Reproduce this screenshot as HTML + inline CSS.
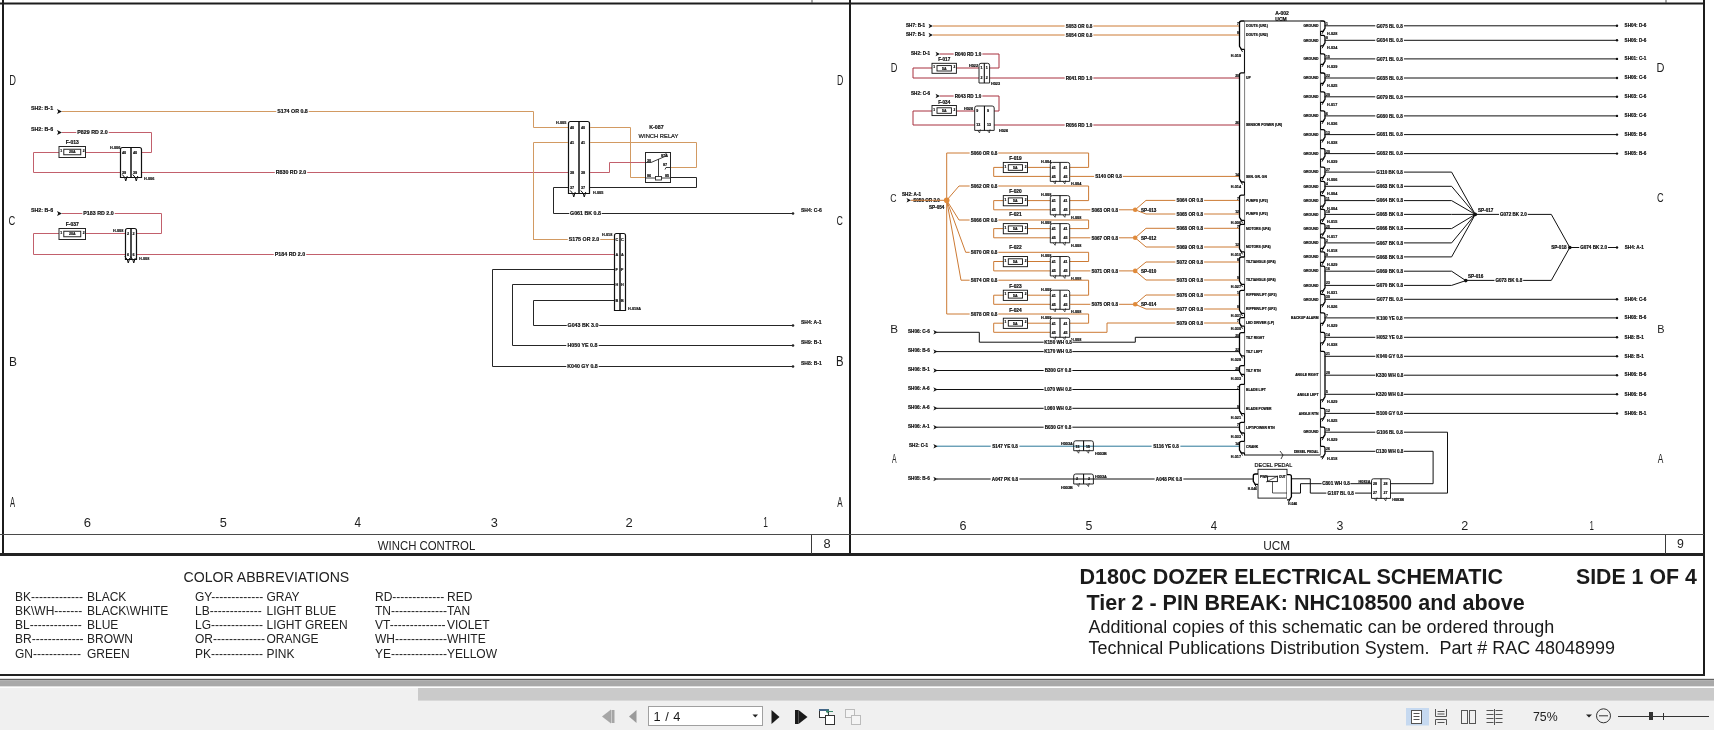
<!DOCTYPE html>
<html><head><meta charset="utf-8"><style>
html,body{margin:0;padding:0;background:#fff;width:1714px;height:730px;overflow:hidden}
svg{position:absolute;left:0;top:0;display:block;will-change:transform}
</style></head><body>
<svg width="1714" height="730" viewBox="0 0 1714 730" xml:space="preserve">
<rect x="0" y="2.5" width="1705" height="2.0" fill="#1c1c1c"/>
<rect x="811.5" y="0" width="1.0" height="3" fill="#555"/>
<rect x="1665.5" y="0" width="1.0" height="3" fill="#555"/>
<rect x="2" y="0" width="2" height="556" fill="#1c1c1c"/>
<rect x="849" y="0" width="2" height="556" fill="#1c1c1c"/>
<rect x="1703" y="0" width="2" height="676" fill="#1c1c1c"/>
<rect x="0" y="534" width="1704" height="1" fill="#4a4a4a"/>
<rect x="0" y="553" width="1705" height="3" fill="#222"/>
<rect x="811" y="535" width="1" height="19" fill="#3a3a3a"/>
<rect x="1665" y="535" width="1" height="19" fill="#3a3a3a"/>
<rect x="0" y="674" width="1705" height="2" fill="#222"/>
<rect x="0" y="678.8" width="1714" height="1.5" fill="#606060"/>
<rect x="0" y="680.3" width="1714" height="6.300000000000068" fill="#a9a9a9"/>
<rect x="0" y="686.6" width="1714" height="1.3999999999999773" fill="#fdfdfd"/>
<rect x="0" y="688" width="1714" height="42" fill="#f0f0f0"/>
<rect x="418" y="688" width="1296" height="12.600000000000023" fill="#cacaca"/>
<text transform="translate(9.25,84.70) scale(0.677,1)" font-size="13.77" fill="#1e1e1e" font-family="Liberation Sans">D</text>
<text transform="translate(837.09,84.70) scale(0.640,1)" font-size="13.77" fill="#1e1e1e" font-family="Liberation Sans">D</text>
<text transform="translate(8.53,225.17) scale(0.707,1)" font-size="13.24" fill="#1e1e1e" font-family="Liberation Sans">C</text>
<text transform="translate(836.56,225.46) scale(0.657,1)" font-size="13.52" fill="#1e1e1e" font-family="Liberation Sans">C</text>
<text transform="translate(8.95,365.80) scale(0.922,1)" font-size="12.90" fill="#1e1e1e" font-family="Liberation Sans">B</text>
<text transform="translate(836.09,366.00) scale(0.822,1)" font-size="13.77" fill="#1e1e1e" font-family="Liberation Sans">B</text>
<text transform="translate(10.00,507.00) scale(0.550,1)" font-size="13.77" fill="#1e1e1e" font-family="Liberation Sans">A</text>
<text transform="translate(837.20,507.00) scale(0.577,1)" font-size="13.91" fill="#1e1e1e" font-family="Liberation Sans">A</text>
<text transform="translate(890.75,71.80) scale(0.748,1)" font-size="12.46" fill="#1e1e1e" font-family="Liberation Sans">D</text>
<text transform="translate(1656.62,72.40) scale(0.874,1)" font-size="12.61" fill="#1e1e1e" font-family="Liberation Sans">D</text>
<text transform="translate(890.26,202.18) scale(0.756,1)" font-size="11.55" fill="#1e1e1e" font-family="Liberation Sans">C</text>
<text transform="translate(1656.94,202.48) scale(0.743,1)" font-size="12.39" fill="#1e1e1e" font-family="Liberation Sans">C</text>
<text transform="translate(890.26,332.80) scale(1.035,1)" font-size="11.30" fill="#1e1e1e" font-family="Liberation Sans">B</text>
<text transform="translate(1657.32,332.60) scale(0.932,1)" font-size="11.74" fill="#1e1e1e" font-family="Liberation Sans">B</text>
<text transform="translate(892.00,463.00) scale(0.547,1)" font-size="12.46" fill="#1e1e1e" font-family="Liberation Sans">A</text>
<text transform="translate(1657.70,463.20) scale(0.639,1)" font-size="13.04" fill="#1e1e1e" font-family="Liberation Sans">A</text>
<text transform="translate(83.75,526.77) scale(0.975,1)" font-size="13.38" fill="#1e1e1e" font-family="Liberation Sans">6</text>
<text transform="translate(219.69,526.76) scale(0.941,1)" font-size="13.57" fill="#1e1e1e" font-family="Liberation Sans">5</text>
<text transform="translate(354.56,527.04) scale(0.842,1)" font-size="13.97" fill="#1e1e1e" font-family="Liberation Sans">4</text>
<text transform="translate(490.69,526.77) scale(0.954,1)" font-size="13.38" fill="#1e1e1e" font-family="Liberation Sans">3</text>
<text transform="translate(625.55,526.90) scale(0.961,1)" font-size="13.57" fill="#1e1e1e" font-family="Liberation Sans">2</text>
<text transform="translate(763.23,526.90) scale(0.608,1)" font-size="13.77" fill="#1e1e1e" font-family="Liberation Sans">1</text>
<text transform="translate(959.47,529.97) scale(1.006,1)" font-size="12.54" fill="#1e1e1e" font-family="Liberation Sans">6</text>
<text transform="translate(1085.51,529.97) scale(0.971,1)" font-size="12.71" fill="#1e1e1e" font-family="Liberation Sans">5</text>
<text transform="translate(1210.77,530.23) scale(0.869,1)" font-size="13.09" fill="#1e1e1e" font-family="Liberation Sans">4</text>
<text transform="translate(1336.51,529.97) scale(0.984,1)" font-size="12.54" fill="#1e1e1e" font-family="Liberation Sans">3</text>
<text transform="translate(1461.37,530.10) scale(0.992,1)" font-size="12.71" fill="#1e1e1e" font-family="Liberation Sans">2</text>
<text transform="translate(1589.57,530.10) scale(0.613,1)" font-size="12.90" fill="#1e1e1e" font-family="Liberation Sans">1</text>
<text transform="translate(426.5,549.8) scale(0.905,1)" font-size="12.6" fill="#222" text-anchor="middle" font-family="Liberation Sans">WINCH CONTROL</text>
<text x="827" y="548.2" font-size="12.8" fill="#222" font-weight="normal" text-anchor="middle" font-family="Liberation Sans" style="white-space:pre" >8</text>
<text transform="translate(1276.7,549.8) scale(0.94,1)" font-size="12.6" fill="#222" text-anchor="middle" font-family="Liberation Sans">UCM</text>
<text x="1680.5" y="548" font-size="12.3" fill="#222" font-weight="normal" text-anchor="middle" font-family="Liberation Sans" style="white-space:pre" >9</text>
<text x="31" y="110" font-size="5.3" fill="#111" font-weight="bold" text-anchor="start" font-family="Liberation Sans" style="white-space:pre"  stroke="#111" stroke-width="0.18">SH2: B-1</text>
<path d="M57,109.0 L62,111.5 L57,114.0 L58.2,111.5 Z" fill="#111"/>
<polyline points="62,111.5 533.5,111.5 533.5,127.5 568,127.5" fill="none" stroke="#d29a62" stroke-width="1"/>
<rect x="276.2675" y="108.5" width="32.46500000000003" height="6.0" fill="#fff"/>
<text x="292.5" y="113.4" font-size="5.3" fill="#111" font-weight="bold" text-anchor="middle" font-family="Liberation Sans" style="white-space:pre"  stroke="#111" stroke-width="0.18">S174 OR 0.8</text>
<text x="31" y="131" font-size="5.3" fill="#111" font-weight="bold" text-anchor="start" font-family="Liberation Sans" style="white-space:pre"  stroke="#111" stroke-width="0.18">SH2: B-6</text>
<path d="M57,130.0 L62,132.5 L57,135.0 L58.2,132.5 Z" fill="#111"/>
<polyline points="62,132.5 151.5,132.5 151.5,152.5 141.5,152.5" fill="none" stroke="#c2606c" stroke-width="1"/>
<rect x="76.2675" y="129.5" width="32.465" height="6.0" fill="#fff"/>
<text x="92.5" y="134.4" font-size="5.3" fill="#111" font-weight="bold" text-anchor="middle" font-family="Liberation Sans" style="white-space:pre"  stroke="#111" stroke-width="0.18">P829 RD 2.0</text>
<polyline points="85.5,152.5 120.5,152.5" fill="none" stroke="#c2606c" stroke-width="1"/>
<polyline points="59,152.5 33.5,152.5 33.5,172.5 120.5,172.5" fill="none" stroke="#c2606c" stroke-width="1"/>
<polyline points="141.5,172.5 568,172.5" fill="none" stroke="#c2606c" stroke-width="1"/>
<rect x="274.7675" y="169.5" width="32.46500000000003" height="6.0" fill="#fff"/>
<text x="291.0" y="174.4" font-size="5.3" fill="#111" font-weight="bold" text-anchor="middle" font-family="Liberation Sans" style="white-space:pre"  stroke="#111" stroke-width="0.18">R830 RD 2.0</text>
<rect x="59" y="146.5" width="26.5" height="11.0" fill="none" stroke="#262626" stroke-width="1" rx="0"/>
<rect x="63.769999999999996" y="149.25" width="16.960000000000008" height="5.5" fill="none" stroke="#262626" stroke-width="1" rx="0"/>
<text x="72.25" y="153.3" font-size="3.6" fill="#111" font-weight="bold" text-anchor="middle" font-family="Liberation Sans" style="white-space:pre"  stroke="#111" stroke-width="0.18">20A</text>
<text x="60.2" y="152.0" font-size="3.4" fill="#111" font-weight="bold" text-anchor="start" font-family="Liberation Sans" style="white-space:pre"  stroke="#111" stroke-width="0.18">1</text>
<text x="82.7" y="152.0" font-size="3.4" fill="#111" font-weight="bold" text-anchor="start" font-family="Liberation Sans" style="white-space:pre"  stroke="#111" stroke-width="0.18">2</text>
<text x="72.25" y="144.0" font-size="5" fill="#111" font-weight="bold" text-anchor="middle" font-family="Liberation Sans" style="white-space:pre"  stroke="#111" stroke-width="0.18">F-013</text>
<path d="M120.5,177.5 L120.5,149.5 Q120.5,147.5 122.5,147.5 L139.5,147.5 Q141.5,147.5 141.5,149.5 L141.5,177.5 Z" fill="none" stroke="#111" stroke-width="1.2"/>
<line x1="131.0" y1="147.5" x2="131.0" y2="177.5" stroke="#111" stroke-width="1.5"/>
<path d="M122.25,174.5 L124.75,177.5 L125.75,181.0 L127.25,176.0" fill="none" stroke="#111" stroke-width="1"/>
<path d="M132.75,174.5 L135.25,177.5 L136.25,181.0 L137.75,176.0" fill="none" stroke="#111" stroke-width="1"/>
<text x="110" y="149" font-size="3.8" fill="#111" font-weight="bold" text-anchor="start" font-family="Liberation Sans" style="white-space:pre"  stroke="#111" stroke-width="0.18">H-006</text>
<text x="122" y="153.8" font-size="3.8" fill="#111" font-weight="bold" text-anchor="start" font-family="Liberation Sans" style="white-space:pre"  stroke="#111" stroke-width="0.18">40</text>
<text x="133" y="153.8" font-size="3.8" fill="#111" font-weight="bold" text-anchor="start" font-family="Liberation Sans" style="white-space:pre"  stroke="#111" stroke-width="0.18">40</text>
<text x="122" y="173.8" font-size="3.8" fill="#111" font-weight="bold" text-anchor="start" font-family="Liberation Sans" style="white-space:pre"  stroke="#111" stroke-width="0.18">39</text>
<text x="133" y="173.8" font-size="3.8" fill="#111" font-weight="bold" text-anchor="start" font-family="Liberation Sans" style="white-space:pre"  stroke="#111" stroke-width="0.18">39</text>
<text x="144" y="180" font-size="3.8" fill="#111" font-weight="bold" text-anchor="start" font-family="Liberation Sans" style="white-space:pre"  stroke="#111" stroke-width="0.18">H-006</text>
<text x="31" y="212" font-size="5.3" fill="#111" font-weight="bold" text-anchor="start" font-family="Liberation Sans" style="white-space:pre"  stroke="#111" stroke-width="0.18">SH2: B-6</text>
<path d="M57,211.0 L62,213.5 L57,216.0 L58.2,213.5 Z" fill="#111"/>
<polyline points="62,213.5 161.5,213.5 161.5,233.5 136.5,233.5" fill="none" stroke="#c2606c" stroke-width="1"/>
<rect x="82.2675" y="210.5" width="32.465" height="6.0" fill="#fff"/>
<text x="98.5" y="215.4" font-size="5.3" fill="#111" font-weight="bold" text-anchor="middle" font-family="Liberation Sans" style="white-space:pre"  stroke="#111" stroke-width="0.18">P183 RD 2.0</text>
<polyline points="85.5,233.5 125.5,233.5" fill="none" stroke="#c2606c" stroke-width="1"/>
<polyline points="59,233.5 33.5,233.5 33.5,254.5 125.5,254.5" fill="none" stroke="#c2606c" stroke-width="1"/>
<polyline points="136.5,254.5 614,254.5" fill="none" stroke="#c2606c" stroke-width="1"/>
<rect x="273.7675" y="251.5" width="32.46500000000003" height="6.0" fill="#fff"/>
<text x="290.0" y="256.4" font-size="5.3" fill="#111" font-weight="bold" text-anchor="middle" font-family="Liberation Sans" style="white-space:pre"  stroke="#111" stroke-width="0.18">P184 RD 2.0</text>
<rect x="59" y="228.5" width="26.5" height="11.0" fill="none" stroke="#262626" stroke-width="1" rx="0"/>
<rect x="63.769999999999996" y="231.25" width="16.960000000000008" height="5.5" fill="none" stroke="#262626" stroke-width="1" rx="0"/>
<text x="72.25" y="235.3" font-size="3.6" fill="#111" font-weight="bold" text-anchor="middle" font-family="Liberation Sans" style="white-space:pre"  stroke="#111" stroke-width="0.18">20A</text>
<text x="60.2" y="234.0" font-size="3.4" fill="#111" font-weight="bold" text-anchor="start" font-family="Liberation Sans" style="white-space:pre"  stroke="#111" stroke-width="0.18">1</text>
<text x="82.7" y="234.0" font-size="3.4" fill="#111" font-weight="bold" text-anchor="start" font-family="Liberation Sans" style="white-space:pre"  stroke="#111" stroke-width="0.18">2</text>
<text x="72.25" y="226.0" font-size="5" fill="#111" font-weight="bold" text-anchor="middle" font-family="Liberation Sans" style="white-space:pre"  stroke="#111" stroke-width="0.18">F-037</text>
<path d="M125.5,259.5 L125.5,230.5 Q125.5,228.5 127.5,228.5 L134.5,228.5 Q136.5,228.5 136.5,230.5 L136.5,259.5 Z" fill="none" stroke="#111" stroke-width="1.2"/>
<line x1="131.0" y1="228.5" x2="131.0" y2="259.5" stroke="#111" stroke-width="1.5"/>
<path d="M124.75,256.5 L127.25,259.5 L128.25,263.0 L129.75,258.0" fill="none" stroke="#111" stroke-width="1"/>
<path d="M130.25,256.5 L132.75,259.5 L133.75,263.0 L135.25,258.0" fill="none" stroke="#111" stroke-width="1"/>
<text x="113" y="232" font-size="3.8" fill="#111" font-weight="bold" text-anchor="start" font-family="Liberation Sans" style="white-space:pre"  stroke="#111" stroke-width="0.18">H-008</text>
<text x="127" y="234.8" font-size="3.8" fill="#111" font-weight="bold" text-anchor="start" font-family="Liberation Sans" style="white-space:pre"  stroke="#111" stroke-width="0.18">2</text>
<text x="132.5" y="234.8" font-size="3.8" fill="#111" font-weight="bold" text-anchor="start" font-family="Liberation Sans" style="white-space:pre"  stroke="#111" stroke-width="0.18">2</text>
<text x="127" y="255.8" font-size="3.8" fill="#111" font-weight="bold" text-anchor="start" font-family="Liberation Sans" style="white-space:pre"  stroke="#111" stroke-width="0.18">6</text>
<text x="132.5" y="255.8" font-size="3.8" fill="#111" font-weight="bold" text-anchor="start" font-family="Liberation Sans" style="white-space:pre"  stroke="#111" stroke-width="0.18">6</text>
<text x="139" y="260" font-size="3.8" fill="#111" font-weight="bold" text-anchor="start" font-family="Liberation Sans" style="white-space:pre"  stroke="#111" stroke-width="0.18">H-008</text>
<path d="M568.5,193.5 L568.5,123.5 Q568.5,121.5 570.5,121.5 L587.5,121.5 Q589.5,121.5 589.5,123.5 L589.5,193.5 Z" fill="none" stroke="#111" stroke-width="1.2"/>
<line x1="579.0" y1="121.5" x2="579.0" y2="193.5" stroke="#111" stroke-width="1.5"/>
<path d="M570.25,190.5 L572.75,193.5 L573.75,197.0 L575.25,192.0" fill="none" stroke="#111" stroke-width="1"/>
<path d="M580.75,190.5 L583.25,193.5 L584.25,197.0 L585.75,192.0" fill="none" stroke="#111" stroke-width="1"/>
<text x="556" y="124" font-size="3.8" fill="#111" font-weight="bold" text-anchor="start" font-family="Liberation Sans" style="white-space:pre"  stroke="#111" stroke-width="0.18">H-005</text>
<text x="570" y="128.8" font-size="3.8" fill="#111" font-weight="bold" text-anchor="start" font-family="Liberation Sans" style="white-space:pre"  stroke="#111" stroke-width="0.18">40</text>
<text x="581" y="128.8" font-size="3.8" fill="#111" font-weight="bold" text-anchor="start" font-family="Liberation Sans" style="white-space:pre"  stroke="#111" stroke-width="0.18">40</text>
<text x="570" y="143.8" font-size="3.8" fill="#111" font-weight="bold" text-anchor="start" font-family="Liberation Sans" style="white-space:pre"  stroke="#111" stroke-width="0.18">41</text>
<text x="581" y="143.8" font-size="3.8" fill="#111" font-weight="bold" text-anchor="start" font-family="Liberation Sans" style="white-space:pre"  stroke="#111" stroke-width="0.18">41</text>
<text x="570" y="173.8" font-size="3.8" fill="#111" font-weight="bold" text-anchor="start" font-family="Liberation Sans" style="white-space:pre"  stroke="#111" stroke-width="0.18">38</text>
<text x="581" y="173.8" font-size="3.8" fill="#111" font-weight="bold" text-anchor="start" font-family="Liberation Sans" style="white-space:pre"  stroke="#111" stroke-width="0.18">38</text>
<text x="570" y="188.8" font-size="3.8" fill="#111" font-weight="bold" text-anchor="start" font-family="Liberation Sans" style="white-space:pre"  stroke="#111" stroke-width="0.18">37</text>
<text x="581" y="188.8" font-size="3.8" fill="#111" font-weight="bold" text-anchor="start" font-family="Liberation Sans" style="white-space:pre"  stroke="#111" stroke-width="0.18">37</text>
<text x="593" y="194" font-size="3.8" fill="#111" font-weight="bold" text-anchor="start" font-family="Liberation Sans" style="white-space:pre"  stroke="#111" stroke-width="0.18">H-005</text>
<polyline points="590,127.5 630.5,127.5 630.5,177.5 645.5,177.5" fill="none" stroke="#d29a62" stroke-width="1"/>
<polyline points="533.5,240 533.5,142.5 568,142.5" fill="none" stroke="#d29a62" stroke-width="1"/>
<polyline points="590,142.5 696.5,142.5 696.5,167.5 670.5,167.5" fill="none" stroke="#d29a62" stroke-width="1"/>
<polyline points="590,172.5 609.5,172.5 609.5,162.5 645.5,162.5" fill="none" stroke="#c2606c" stroke-width="1"/>
<polyline points="553.5,213.5 553.5,187.5 568,187.5" fill="none" stroke="#262626" stroke-width="1"/>
<polyline points="590,187.5 696.5,187.5 696.5,177.5 670.5,177.5" fill="none" stroke="#262626" stroke-width="1"/>
<rect x="645.5" y="152.5" width="25.0" height="30.0" fill="none" stroke="#262626" stroke-width="1" rx="0"/>
<text x="656.5" y="129" font-size="5.3" fill="#111" font-weight="bold" text-anchor="middle" font-family="Liberation Sans" style="white-space:pre"  stroke="#111" stroke-width="0.18">K-087</text>
<text x="658.5" y="138" font-size="5.8" fill="#111" font-weight="normal" text-anchor="middle" font-family="Liberation Sans" style="white-space:pre"  stroke="#111" stroke-width="0.18">WINCH RELAY</text>
<polyline points="645.5,162.5 651,162.5 666,156 666,153" fill="none" stroke="#262626" stroke-width="0.9"/>
<polyline points="658.5,159 658.5,176.5" fill="none" stroke="#262626" stroke-width="0.9"/>
<rect x="655.5" y="176.5" width="6.0" height="3.5" fill="none" stroke="#262626" stroke-width="0.9" rx="0"/>
<polyline points="645.5,178 655.5,178" fill="none" stroke="#262626" stroke-width="0.9"/>
<polyline points="661.5,178 670.5,178" fill="none" stroke="#262626" stroke-width="0.9"/>
<polyline points="670.5,167.5 666,167.5 665,169.5" fill="none" stroke="#262626" stroke-width="0.9"/>
<text x="647" y="161.5" font-size="3.8" fill="#111" font-weight="bold" text-anchor="start" font-family="Liberation Sans" style="white-space:pre"  stroke="#111" stroke-width="0.18">30</text>
<text x="661" y="157" font-size="3.8" fill="#111" font-weight="bold" text-anchor="start" font-family="Liberation Sans" style="white-space:pre"  stroke="#111" stroke-width="0.18">87A</text>
<text x="663" y="166" font-size="3.8" fill="#111" font-weight="bold" text-anchor="start" font-family="Liberation Sans" style="white-space:pre"  stroke="#111" stroke-width="0.18">87</text>
<text x="647" y="176.5" font-size="3.8" fill="#111" font-weight="bold" text-anchor="start" font-family="Liberation Sans" style="white-space:pre"  stroke="#111" stroke-width="0.18">86</text>
<text x="665" y="176.5" font-size="3.8" fill="#111" font-weight="bold" text-anchor="start" font-family="Liberation Sans" style="white-space:pre"  stroke="#111" stroke-width="0.18">85</text>
<polyline points="553.5,213.5 793,213.5" fill="none" stroke="#262626" stroke-width="1"/>
<rect x="569.2674999999999" y="210.5" width="32.465000000000146" height="6.0" fill="#fff"/>
<text x="585.5" y="215.4" font-size="5.3" fill="#111" font-weight="bold" text-anchor="middle" font-family="Liberation Sans" style="white-space:pre"  stroke="#111" stroke-width="0.18">G061 BK 0.8</text>
<circle cx="793" cy="213.5" r="1.3" fill="#262626"/>
<text x="801" y="211.5" font-size="5" fill="#111" font-weight="bold" text-anchor="start" font-family="Liberation Sans" style="white-space:pre"  stroke="#111" stroke-width="0.18">SH4: C-6</text>
<polyline points="533.5,239.5 614,239.5" fill="none" stroke="#d29a62" stroke-width="1"/>
<rect x="567.7674999999999" y="236.5" width="32.465000000000146" height="6.0" fill="#fff"/>
<text x="584.0" y="241.4" font-size="5.3" fill="#111" font-weight="bold" text-anchor="middle" font-family="Liberation Sans" style="white-space:pre"  stroke="#111" stroke-width="0.18">S175 OR 2.0</text>
<path d="M614.5,310.5 L614.5,235.5 Q614.5,233.5 616.5,233.5 L623.5,233.5 Q625.5,233.5 625.5,235.5 L625.5,310.5 Z" fill="none" stroke="#111" stroke-width="1.2"/>
<line x1="620.0" y1="233.5" x2="620.0" y2="310.5" stroke="#111" stroke-width="1.5"/>
<text x="602" y="236" font-size="3.8" fill="#111" font-weight="bold" text-anchor="start" font-family="Liberation Sans" style="white-space:pre"  stroke="#111" stroke-width="0.18">H-018</text>
<text x="615.5" y="240.8" font-size="3.8" fill="#111" font-weight="bold" text-anchor="start" font-family="Liberation Sans" style="white-space:pre"  stroke="#111" stroke-width="0.18">C</text>
<text x="621" y="240.8" font-size="3.8" fill="#111" font-weight="bold" text-anchor="start" font-family="Liberation Sans" style="white-space:pre"  stroke="#111" stroke-width="0.18">C</text>
<text x="615.5" y="255.8" font-size="3.8" fill="#111" font-weight="bold" text-anchor="start" font-family="Liberation Sans" style="white-space:pre"  stroke="#111" stroke-width="0.18">A</text>
<text x="621" y="255.8" font-size="3.8" fill="#111" font-weight="bold" text-anchor="start" font-family="Liberation Sans" style="white-space:pre"  stroke="#111" stroke-width="0.18">A</text>
<text x="615.5" y="270.8" font-size="3.8" fill="#111" font-weight="bold" text-anchor="start" font-family="Liberation Sans" style="white-space:pre"  stroke="#111" stroke-width="0.18">F</text>
<text x="621" y="270.8" font-size="3.8" fill="#111" font-weight="bold" text-anchor="start" font-family="Liberation Sans" style="white-space:pre"  stroke="#111" stroke-width="0.18">F</text>
<text x="615.5" y="285.8" font-size="3.8" fill="#111" font-weight="bold" text-anchor="start" font-family="Liberation Sans" style="white-space:pre"  stroke="#111" stroke-width="0.18">H</text>
<text x="621" y="285.8" font-size="3.8" fill="#111" font-weight="bold" text-anchor="start" font-family="Liberation Sans" style="white-space:pre"  stroke="#111" stroke-width="0.18">H</text>
<text x="615.5" y="301.8" font-size="3.8" fill="#111" font-weight="bold" text-anchor="start" font-family="Liberation Sans" style="white-space:pre"  stroke="#111" stroke-width="0.18">B</text>
<text x="621" y="301.8" font-size="3.8" fill="#111" font-weight="bold" text-anchor="start" font-family="Liberation Sans" style="white-space:pre"  stroke="#111" stroke-width="0.18">B</text>
<text x="628" y="310" font-size="3.8" fill="#111" font-weight="bold" text-anchor="start" font-family="Liberation Sans" style="white-space:pre"  stroke="#111" stroke-width="0.18">H-018A</text>
<polyline points="614,269.5 492.5,269.5 492.5,366.5 793,366.5" fill="none" stroke="#262626" stroke-width="1"/>
<polyline points="614,284.5 512.5,284.5 512.5,345.5 793,345.5" fill="none" stroke="#262626" stroke-width="1"/>
<polyline points="614,300.5 533.5,300.5 533.5,325.5 793,325.5" fill="none" stroke="#262626" stroke-width="1"/>
<rect x="566.7674999999999" y="322.5" width="32.465000000000146" height="6.0" fill="#fff"/>
<text x="583.0" y="327.4" font-size="5.3" fill="#111" font-weight="bold" text-anchor="middle" font-family="Liberation Sans" style="white-space:pre"  stroke="#111" stroke-width="0.18">G043 BK 3.0</text>
<rect x="566.2674999999999" y="342.5" width="32.465000000000146" height="6.0" fill="#fff"/>
<text x="582.5" y="347.4" font-size="5.3" fill="#111" font-weight="bold" text-anchor="middle" font-family="Liberation Sans" style="white-space:pre"  stroke="#111" stroke-width="0.18">H050 YE 0.8</text>
<rect x="566.2674999999999" y="363.5" width="32.465000000000146" height="6.0" fill="#fff"/>
<text x="582.5" y="368.4" font-size="5.3" fill="#111" font-weight="bold" text-anchor="middle" font-family="Liberation Sans" style="white-space:pre"  stroke="#111" stroke-width="0.18">K040 GY 0.8</text>
<circle cx="793" cy="325.5" r="1.3" fill="#262626"/>
<text x="801" y="323.5" font-size="5" fill="#111" font-weight="bold" text-anchor="start" font-family="Liberation Sans" style="white-space:pre"  stroke="#111" stroke-width="0.18">SH4: A-1</text>
<circle cx="793" cy="345.5" r="1.3" fill="#262626"/>
<text x="801" y="343.5" font-size="5" fill="#111" font-weight="bold" text-anchor="start" font-family="Liberation Sans" style="white-space:pre"  stroke="#111" stroke-width="0.18">SH9: B-1</text>
<circle cx="793" cy="366.5" r="1.3" fill="#262626"/>
<text x="801" y="364.5" font-size="5" fill="#111" font-weight="bold" text-anchor="start" font-family="Liberation Sans" style="white-space:pre"  stroke="#111" stroke-width="0.18">SH8: B-1</text>
<text x="906" y="26.7" font-size="4.6" fill="#0a0a0a" font-weight="bold" text-anchor="start" font-family="Liberation Sans" style="white-space:pre"  stroke="#0a0a0a" stroke-width="0.18">SH7: B-1</text>
<path d="M928.5,23.8 L933,26 L928.5,28.2 L929.7,26 Z" fill="#111"/>
<polyline points="933,26 1239.5,26" fill="none" stroke="#cc7a34" stroke-width="1"/>
<rect x="1064.632" y="23.4" width="28.735999999999876" height="5.200000000000003" fill="#fff"/>
<text x="1079" y="27.7" font-size="4.6" fill="#0a0a0a" font-weight="bold" text-anchor="middle" font-family="Liberation Sans" style="white-space:pre"  stroke="#0a0a0a" stroke-width="0.18">S053 OR 0.8</text>
<text x="906" y="35.7" font-size="4.6" fill="#0a0a0a" font-weight="bold" text-anchor="start" font-family="Liberation Sans" style="white-space:pre"  stroke="#0a0a0a" stroke-width="0.18">SH7: B-1</text>
<path d="M928.5,32.8 L933,35 L928.5,37.2 L929.7,35 Z" fill="#111"/>
<polyline points="933,35 1239.5,35" fill="none" stroke="#cc7a34" stroke-width="1"/>
<rect x="1064.632" y="32.4" width="28.735999999999876" height="5.200000000000003" fill="#fff"/>
<text x="1079" y="36.7" font-size="4.6" fill="#0a0a0a" font-weight="bold" text-anchor="middle" font-family="Liberation Sans" style="white-space:pre"  stroke="#0a0a0a" stroke-width="0.18">S054 OR 0.8</text>
<text x="911" y="54.7" font-size="4.6" fill="#0a0a0a" font-weight="bold" text-anchor="start" font-family="Liberation Sans" style="white-space:pre"  stroke="#0a0a0a" stroke-width="0.18">SH2: D-1</text>
<path d="M935.5,51.8 L940,54 L935.5,56.2 L936.7,54 Z" fill="#111"/>
<polyline points="940,54 999,54 999,68 989.6,68" fill="none" stroke="#a8303e" stroke-width="1"/>
<rect x="953.632" y="51.4" width="28.736000000000104" height="5.200000000000003" fill="#fff"/>
<text x="968" y="55.7" font-size="4.6" fill="#0a0a0a" font-weight="bold" text-anchor="middle" font-family="Liberation Sans" style="white-space:pre"  stroke="#0a0a0a" stroke-width="0.18">R040 RD 1.0</text>
<polyline points="956.4,68 979,68" fill="none" stroke="#a8303e" stroke-width="1"/>
<polyline points="932,68 913,68 913,78 979,78" fill="none" stroke="#a8303e" stroke-width="1"/>
<polyline points="989.6,78 1239.5,78" fill="none" stroke="#a8303e" stroke-width="1"/>
<rect x="1064.632" y="75.4" width="28.735999999999876" height="5.199999999999989" fill="#fff"/>
<text x="1079" y="79.7" font-size="4.6" fill="#0a0a0a" font-weight="bold" text-anchor="middle" font-family="Liberation Sans" style="white-space:pre"  stroke="#0a0a0a" stroke-width="0.18">R041 RD 1.0</text>
<rect x="932" y="63.3" width="24.399999999999977" height="10.0" fill="none" stroke="#101010" stroke-width="0.9" rx="0"/>
<rect x="937" y="65.6" width="14.399999999999977" height="5.400000000000006" fill="none" stroke="#101010" stroke-width="0.9" rx="0"/>
<text x="944.2" y="69.6" font-size="3.6" fill="#0a0a0a" font-weight="bold" text-anchor="middle" font-family="Liberation Sans" style="white-space:pre"  stroke="#0a0a0a" stroke-width="0.18">5A</text>
<text x="933.3" y="68.3" font-size="3.2" fill="#0a0a0a" font-weight="bold" text-anchor="start" font-family="Liberation Sans" style="white-space:pre"  stroke="#0a0a0a" stroke-width="0.18">1</text>
<text x="953.6" y="68.3" font-size="3.2" fill="#0a0a0a" font-weight="bold" text-anchor="start" font-family="Liberation Sans" style="white-space:pre"  stroke="#0a0a0a" stroke-width="0.18">2</text>
<text x="944.2" y="61.3" font-size="4.6" fill="#0a0a0a" font-weight="bold" text-anchor="middle" font-family="Liberation Sans" style="white-space:pre"  stroke="#0a0a0a" stroke-width="0.18">F-017</text>
<path d="M979,83 L979,65.3 Q979,63.3 981,63.3 L987.6,63.3 Q989.6,63.3 989.6,65.3 L989.6,83 Z" fill="none" stroke="#101010" stroke-width="0.9"/>
<line x1="984.3" y1="63.3" x2="984.3" y2="83" stroke="#101010" stroke-width="1.1"/>
<text x="980.5" y="69.3" font-size="3.6" fill="#0a0a0a" font-weight="bold" text-anchor="start" font-family="Liberation Sans" style="white-space:pre"  stroke="#0a0a0a" stroke-width="0.18">1</text>
<text x="985.8" y="69.3" font-size="3.6" fill="#0a0a0a" font-weight="bold" text-anchor="start" font-family="Liberation Sans" style="white-space:pre"  stroke="#0a0a0a" stroke-width="0.18">1</text>
<text x="980.5" y="79.3" font-size="3.6" fill="#0a0a0a" font-weight="bold" text-anchor="start" font-family="Liberation Sans" style="white-space:pre"  stroke="#0a0a0a" stroke-width="0.18">2</text>
<text x="985.8" y="79.3" font-size="3.6" fill="#0a0a0a" font-weight="bold" text-anchor="start" font-family="Liberation Sans" style="white-space:pre"  stroke="#0a0a0a" stroke-width="0.18">2</text>
<text x="969" y="66.7" font-size="3.8" fill="#0a0a0a" font-weight="bold" text-anchor="start" font-family="Liberation Sans" style="white-space:pre"  stroke="#0a0a0a" stroke-width="0.18">H022</text>
<text x="991" y="84.7" font-size="3.8" fill="#0a0a0a" font-weight="bold" text-anchor="start" font-family="Liberation Sans" style="white-space:pre"  stroke="#0a0a0a" stroke-width="0.18">H023</text>
<text x="911" y="94.7" font-size="4.6" fill="#0a0a0a" font-weight="bold" text-anchor="start" font-family="Liberation Sans" style="white-space:pre"  stroke="#0a0a0a" stroke-width="0.18">SH2: C-6</text>
<path d="M935.5,93.8 L940,96 L935.5,98.2 L936.7,96 Z" fill="#111"/>
<polyline points="940,96 999,96 999,111 994.2,111" fill="none" stroke="#a8303e" stroke-width="1"/>
<rect x="953.632" y="93.4" width="28.736000000000104" height="5.199999999999989" fill="#fff"/>
<text x="968" y="97.7" font-size="4.6" fill="#0a0a0a" font-weight="bold" text-anchor="middle" font-family="Liberation Sans" style="white-space:pre"  stroke="#0a0a0a" stroke-width="0.18">R043 RD 1.0</text>
<polyline points="956.4,111 974.7,111" fill="none" stroke="#a8303e" stroke-width="1"/>
<polyline points="932,111 913,111 913,125 974.7,125" fill="none" stroke="#a8303e" stroke-width="1"/>
<polyline points="994.2,125 1239.5,125" fill="none" stroke="#a8303e" stroke-width="1"/>
<rect x="1064.632" y="122.4" width="28.735999999999876" height="5.199999999999989" fill="#fff"/>
<text x="1079" y="126.7" font-size="4.6" fill="#0a0a0a" font-weight="bold" text-anchor="middle" font-family="Liberation Sans" style="white-space:pre"  stroke="#0a0a0a" stroke-width="0.18">R056 RD 1.0</text>
<rect x="932" y="105.5" width="24.399999999999977" height="10.099999999999994" fill="none" stroke="#101010" stroke-width="0.9" rx="0"/>
<rect x="937" y="107.8" width="14.399999999999977" height="5.5" fill="none" stroke="#101010" stroke-width="0.9" rx="0"/>
<text x="944.2" y="111.85" font-size="3.6" fill="#0a0a0a" font-weight="bold" text-anchor="middle" font-family="Liberation Sans" style="white-space:pre"  stroke="#0a0a0a" stroke-width="0.18">5A</text>
<text x="933.3" y="110.55" font-size="3.2" fill="#0a0a0a" font-weight="bold" text-anchor="start" font-family="Liberation Sans" style="white-space:pre"  stroke="#0a0a0a" stroke-width="0.18">1</text>
<text x="953.6" y="110.55" font-size="3.2" fill="#0a0a0a" font-weight="bold" text-anchor="start" font-family="Liberation Sans" style="white-space:pre"  stroke="#0a0a0a" stroke-width="0.18">2</text>
<text x="944.2" y="103.5" font-size="4.6" fill="#0a0a0a" font-weight="bold" text-anchor="middle" font-family="Liberation Sans" style="white-space:pre"  stroke="#0a0a0a" stroke-width="0.18">F-034</text>
<path d="M974.7,130.4 L974.7,108 Q974.7,106 976.7,106 L992.2,106 Q994.2,106 994.2,108 L994.2,130.4 Z" fill="none" stroke="#101010" stroke-width="0.9"/>
<line x1="984.45" y1="106" x2="984.45" y2="130.4" stroke="#101010" stroke-width="1.1"/>
<path d="M977.575,130.4 L979.575,132.9 L980.375,129.4" fill="none" stroke="#101010" stroke-width="0.7"/>
<path d="M987.325,130.4 L989.325,132.9 L990.125,129.4" fill="none" stroke="#101010" stroke-width="0.7"/>
<text x="976.2" y="112.3" font-size="3.6" fill="#0a0a0a" font-weight="bold" text-anchor="start" font-family="Liberation Sans" style="white-space:pre"  stroke="#0a0a0a" stroke-width="0.18">9</text>
<text x="987" y="112.3" font-size="3.6" fill="#0a0a0a" font-weight="bold" text-anchor="start" font-family="Liberation Sans" style="white-space:pre"  stroke="#0a0a0a" stroke-width="0.18">9</text>
<text x="976.2" y="126.3" font-size="3.6" fill="#0a0a0a" font-weight="bold" text-anchor="start" font-family="Liberation Sans" style="white-space:pre"  stroke="#0a0a0a" stroke-width="0.18">13</text>
<text x="987" y="126.3" font-size="3.6" fill="#0a0a0a" font-weight="bold" text-anchor="start" font-family="Liberation Sans" style="white-space:pre"  stroke="#0a0a0a" stroke-width="0.18">13</text>
<text x="964" y="109.7" font-size="3.8" fill="#0a0a0a" font-weight="bold" text-anchor="start" font-family="Liberation Sans" style="white-space:pre"  stroke="#0a0a0a" stroke-width="0.18">H026</text>
<text x="999" y="131.7" font-size="3.8" fill="#0a0a0a" font-weight="bold" text-anchor="start" font-family="Liberation Sans" style="white-space:pre"  stroke="#0a0a0a" stroke-width="0.18">H026</text>
<text x="902" y="195.7" font-size="4.6" fill="#0a0a0a" font-weight="bold" text-anchor="start" font-family="Liberation Sans" style="white-space:pre"  stroke="#0a0a0a" stroke-width="0.18">SH2: A-1</text>
<path d="M906.5,198.10000000000002 L911,200.3 L906.5,202.5 L907.7,200.3 Z" fill="#111"/>
<rect x="912.132" y="197.70000000000002" width="28.736000000000104" height="5.199999999999989" fill="#fff"/>
<text x="926.5" y="202.0" font-size="4.6" fill="#0a0a0a" font-weight="bold" text-anchor="middle" font-family="Liberation Sans" style="white-space:pre"  stroke="#0a0a0a" stroke-width="0.18">S059 OR 2.0</text>
<polyline points="911,200.3 946.7,200.3" fill="none" stroke="#cc7a34" stroke-width="1"/>
<text x="929" y="208.7" font-size="4.6" fill="#0a0a0a" font-weight="bold" text-anchor="start" font-family="Liberation Sans" style="white-space:pre"  stroke="#0a0a0a" stroke-width="0.18">SP-054</text>
<line x1="946.7" y1="153" x2="946.7" y2="314" stroke="#cc7a34" stroke-width="1"/>
<polyline points="946.7,153 1088.6,153 1088.6,167.4 1069.7,167.4" fill="none" stroke="#cc7a34" stroke-width="1"/>
<rect x="969.632" y="150.4" width="28.736000000000104" height="5.199999999999989" fill="#fff"/>
<text x="984" y="154.7" font-size="4.6" fill="#0a0a0a" font-weight="bold" text-anchor="middle" font-family="Liberation Sans" style="white-space:pre"  stroke="#0a0a0a" stroke-width="0.18">S060 OR 0.8</text>
<polyline points="1027.5,167.4 1050.3,167.4" fill="none" stroke="#cc7a34" stroke-width="1"/>
<polyline points="1003.3,167.4 993.7,167.4 993.7,176.4 1050.3,176.4" fill="none" stroke="#cc7a34" stroke-width="1"/>
<rect x="1003.3" y="162.4" width="24.200000000000045" height="10.199999999999989" fill="none" stroke="#101010" stroke-width="0.9" rx="0"/>
<rect x="1008.3" y="164.70000000000002" width="14.200000000000045" height="5.599999999999966" fill="none" stroke="#101010" stroke-width="0.9" rx="0"/>
<text x="1015.4" y="168.8" font-size="3.6" fill="#0a0a0a" font-weight="bold" text-anchor="middle" font-family="Liberation Sans" style="white-space:pre"  stroke="#0a0a0a" stroke-width="0.18">5A</text>
<text x="1004.5999999999999" y="167.5" font-size="3.2" fill="#0a0a0a" font-weight="bold" text-anchor="start" font-family="Liberation Sans" style="white-space:pre"  stroke="#0a0a0a" stroke-width="0.18">1</text>
<text x="1024.7" y="167.5" font-size="3.2" fill="#0a0a0a" font-weight="bold" text-anchor="start" font-family="Liberation Sans" style="white-space:pre"  stroke="#0a0a0a" stroke-width="0.18">2</text>
<text x="1015.4" y="160.29999999999998" font-size="4.8" fill="#0a0a0a" font-weight="bold" text-anchor="middle" font-family="Liberation Sans" style="white-space:pre"  stroke="#0a0a0a" stroke-width="0.18">F-019</text>
<path d="M1050.3,181.4 L1050.3,164.4 Q1050.3,162.4 1052.3,162.4 L1067.7,162.4 Q1069.7,162.4 1069.7,164.4 L1069.7,181.4 Z" fill="none" stroke="#101010" stroke-width="0.9"/>
<line x1="1060.0" y1="162.4" x2="1060.0" y2="181.4" stroke="#101010" stroke-width="1.1"/>
<path d="M1053.15,181.4 L1055.15,183.9 L1055.95,180.4" fill="none" stroke="#101010" stroke-width="0.7"/>
<path d="M1062.85,181.4 L1064.85,183.9 L1065.6499999999999,180.4" fill="none" stroke="#101010" stroke-width="0.7"/>
<text x="1051.8" y="168.70000000000002" font-size="3.6" fill="#0a0a0a" font-weight="bold" text-anchor="start" font-family="Liberation Sans" style="white-space:pre"  stroke="#0a0a0a" stroke-width="0.18">41</text>
<text x="1063.5" y="168.70000000000002" font-size="3.6" fill="#0a0a0a" font-weight="bold" text-anchor="start" font-family="Liberation Sans" style="white-space:pre"  stroke="#0a0a0a" stroke-width="0.18">41</text>
<text x="1051.8" y="177.70000000000002" font-size="3.6" fill="#0a0a0a" font-weight="bold" text-anchor="start" font-family="Liberation Sans" style="white-space:pre"  stroke="#0a0a0a" stroke-width="0.18">45</text>
<text x="1063.5" y="177.70000000000002" font-size="3.6" fill="#0a0a0a" font-weight="bold" text-anchor="start" font-family="Liberation Sans" style="white-space:pre"  stroke="#0a0a0a" stroke-width="0.18">45</text>
<text x="1041" y="163.1" font-size="3.8" fill="#0a0a0a" font-weight="bold" text-anchor="start" font-family="Liberation Sans" style="white-space:pre"  stroke="#0a0a0a" stroke-width="0.18">H-004</text>
<text x="1071" y="185.1" font-size="3.8" fill="#0a0a0a" font-weight="bold" text-anchor="start" font-family="Liberation Sans" style="white-space:pre"  stroke="#0a0a0a" stroke-width="0.18">H-004</text>
<polyline points="946.7,200.3 959,186" fill="none" stroke="#cc7a34" stroke-width="1"/>
<polyline points="959,186 1088.6,186 1088.6,200.6 1069.7,200.6" fill="none" stroke="#cc7a34" stroke-width="1"/>
<rect x="969.632" y="183.4" width="28.736000000000104" height="5.199999999999989" fill="#fff"/>
<text x="984" y="187.7" font-size="4.6" fill="#0a0a0a" font-weight="bold" text-anchor="middle" font-family="Liberation Sans" style="white-space:pre"  stroke="#0a0a0a" stroke-width="0.18">S062 OR 0.8</text>
<polyline points="1027.5,200.6 1050.3,200.6" fill="none" stroke="#cc7a34" stroke-width="1"/>
<polyline points="1003.3,200.6 993.7,200.6 993.7,209.8 1050.3,209.8" fill="none" stroke="#cc7a34" stroke-width="1"/>
<rect x="1003.3" y="195.6" width="24.200000000000045" height="10.199999999999989" fill="none" stroke="#101010" stroke-width="0.9" rx="0"/>
<rect x="1008.3" y="197.9" width="14.200000000000045" height="5.599999999999966" fill="none" stroke="#101010" stroke-width="0.9" rx="0"/>
<text x="1015.4" y="202.0" font-size="3.6" fill="#0a0a0a" font-weight="bold" text-anchor="middle" font-family="Liberation Sans" style="white-space:pre"  stroke="#0a0a0a" stroke-width="0.18">5A</text>
<text x="1004.5999999999999" y="200.7" font-size="3.2" fill="#0a0a0a" font-weight="bold" text-anchor="start" font-family="Liberation Sans" style="white-space:pre"  stroke="#0a0a0a" stroke-width="0.18">1</text>
<text x="1024.7" y="200.7" font-size="3.2" fill="#0a0a0a" font-weight="bold" text-anchor="start" font-family="Liberation Sans" style="white-space:pre"  stroke="#0a0a0a" stroke-width="0.18">2</text>
<text x="1015.4" y="193.2" font-size="4.8" fill="#0a0a0a" font-weight="bold" text-anchor="middle" font-family="Liberation Sans" style="white-space:pre"  stroke="#0a0a0a" stroke-width="0.18">F-020</text>
<path d="M1050.3,214.8 L1050.3,197.6 Q1050.3,195.6 1052.3,195.6 L1067.7,195.6 Q1069.7,195.6 1069.7,197.6 L1069.7,214.8 Z" fill="none" stroke="#101010" stroke-width="0.9"/>
<line x1="1060.0" y1="195.6" x2="1060.0" y2="214.8" stroke="#101010" stroke-width="1.1"/>
<path d="M1053.15,214.8 L1055.15,217.3 L1055.95,213.8" fill="none" stroke="#101010" stroke-width="0.7"/>
<path d="M1062.85,214.8 L1064.85,217.3 L1065.6499999999999,213.8" fill="none" stroke="#101010" stroke-width="0.7"/>
<text x="1051.8" y="201.9" font-size="3.6" fill="#0a0a0a" font-weight="bold" text-anchor="start" font-family="Liberation Sans" style="white-space:pre"  stroke="#0a0a0a" stroke-width="0.18">41</text>
<text x="1063.5" y="201.9" font-size="3.6" fill="#0a0a0a" font-weight="bold" text-anchor="start" font-family="Liberation Sans" style="white-space:pre"  stroke="#0a0a0a" stroke-width="0.18">41</text>
<text x="1051.8" y="211.10000000000002" font-size="3.6" fill="#0a0a0a" font-weight="bold" text-anchor="start" font-family="Liberation Sans" style="white-space:pre"  stroke="#0a0a0a" stroke-width="0.18">45</text>
<text x="1063.5" y="211.10000000000002" font-size="3.6" fill="#0a0a0a" font-weight="bold" text-anchor="start" font-family="Liberation Sans" style="white-space:pre"  stroke="#0a0a0a" stroke-width="0.18">45</text>
<text x="1041" y="196.29999999999998" font-size="3.8" fill="#0a0a0a" font-weight="bold" text-anchor="start" font-family="Liberation Sans" style="white-space:pre"  stroke="#0a0a0a" stroke-width="0.18">H-008</text>
<text x="1071" y="218.5" font-size="3.8" fill="#0a0a0a" font-weight="bold" text-anchor="start" font-family="Liberation Sans" style="white-space:pre"  stroke="#0a0a0a" stroke-width="0.18">H-008</text>
<polyline points="946.7,200.3 959,220" fill="none" stroke="#cc7a34" stroke-width="1"/>
<polyline points="959,220 1088.6,220 1088.6,228.6 1069.7,228.6" fill="none" stroke="#cc7a34" stroke-width="1"/>
<rect x="969.632" y="217.4" width="28.736000000000104" height="5.199999999999989" fill="#fff"/>
<text x="984" y="221.7" font-size="4.6" fill="#0a0a0a" font-weight="bold" text-anchor="middle" font-family="Liberation Sans" style="white-space:pre"  stroke="#0a0a0a" stroke-width="0.18">S066 OR 0.8</text>
<polyline points="1027.5,228.6 1050.3,228.6" fill="none" stroke="#cc7a34" stroke-width="1"/>
<polyline points="1003.3,228.6 993.7,228.6 993.7,237.8 1050.3,237.8" fill="none" stroke="#cc7a34" stroke-width="1"/>
<rect x="1003.3" y="223.6" width="24.200000000000045" height="10.199999999999989" fill="none" stroke="#101010" stroke-width="0.9" rx="0"/>
<rect x="1008.3" y="225.9" width="14.200000000000045" height="5.599999999999966" fill="none" stroke="#101010" stroke-width="0.9" rx="0"/>
<text x="1015.4" y="230.0" font-size="3.6" fill="#0a0a0a" font-weight="bold" text-anchor="middle" font-family="Liberation Sans" style="white-space:pre"  stroke="#0a0a0a" stroke-width="0.18">5A</text>
<text x="1004.5999999999999" y="228.7" font-size="3.2" fill="#0a0a0a" font-weight="bold" text-anchor="start" font-family="Liberation Sans" style="white-space:pre"  stroke="#0a0a0a" stroke-width="0.18">1</text>
<text x="1024.7" y="228.7" font-size="3.2" fill="#0a0a0a" font-weight="bold" text-anchor="start" font-family="Liberation Sans" style="white-space:pre"  stroke="#0a0a0a" stroke-width="0.18">2</text>
<text x="1015.4" y="215.7" font-size="4.8" fill="#0a0a0a" font-weight="bold" text-anchor="middle" font-family="Liberation Sans" style="white-space:pre"  stroke="#0a0a0a" stroke-width="0.18">F-021</text>
<path d="M1050.3,242.8 L1050.3,225.6 Q1050.3,223.6 1052.3,223.6 L1067.7,223.6 Q1069.7,223.6 1069.7,225.6 L1069.7,242.8 Z" fill="none" stroke="#101010" stroke-width="0.9"/>
<line x1="1060.0" y1="223.6" x2="1060.0" y2="242.8" stroke="#101010" stroke-width="1.1"/>
<path d="M1053.15,242.8 L1055.15,245.3 L1055.95,241.8" fill="none" stroke="#101010" stroke-width="0.7"/>
<path d="M1062.85,242.8 L1064.85,245.3 L1065.6499999999999,241.8" fill="none" stroke="#101010" stroke-width="0.7"/>
<text x="1051.8" y="229.9" font-size="3.6" fill="#0a0a0a" font-weight="bold" text-anchor="start" font-family="Liberation Sans" style="white-space:pre"  stroke="#0a0a0a" stroke-width="0.18">41</text>
<text x="1063.5" y="229.9" font-size="3.6" fill="#0a0a0a" font-weight="bold" text-anchor="start" font-family="Liberation Sans" style="white-space:pre"  stroke="#0a0a0a" stroke-width="0.18">41</text>
<text x="1051.8" y="239.10000000000002" font-size="3.6" fill="#0a0a0a" font-weight="bold" text-anchor="start" font-family="Liberation Sans" style="white-space:pre"  stroke="#0a0a0a" stroke-width="0.18">45</text>
<text x="1063.5" y="239.10000000000002" font-size="3.6" fill="#0a0a0a" font-weight="bold" text-anchor="start" font-family="Liberation Sans" style="white-space:pre"  stroke="#0a0a0a" stroke-width="0.18">45</text>
<text x="1041" y="224.29999999999998" font-size="3.8" fill="#0a0a0a" font-weight="bold" text-anchor="start" font-family="Liberation Sans" style="white-space:pre"  stroke="#0a0a0a" stroke-width="0.18">H-008</text>
<text x="1071" y="246.5" font-size="3.8" fill="#0a0a0a" font-weight="bold" text-anchor="start" font-family="Liberation Sans" style="white-space:pre"  stroke="#0a0a0a" stroke-width="0.18">H-008</text>
<polyline points="946.7,200.3 965.7,252.3" fill="none" stroke="#cc7a34" stroke-width="1"/>
<polyline points="965.7,252.3 1088.6,252.3 1088.6,261.5 1069.7,261.5" fill="none" stroke="#cc7a34" stroke-width="1"/>
<rect x="969.632" y="249.70000000000002" width="28.736000000000104" height="5.199999999999989" fill="#fff"/>
<text x="984" y="254.0" font-size="4.6" fill="#0a0a0a" font-weight="bold" text-anchor="middle" font-family="Liberation Sans" style="white-space:pre"  stroke="#0a0a0a" stroke-width="0.18">S070 OR 0.8</text>
<polyline points="1027.5,261.5 1050.3,261.5" fill="none" stroke="#cc7a34" stroke-width="1"/>
<polyline points="1003.3,261.5 993.7,261.5 993.7,270.9 1050.3,270.9" fill="none" stroke="#cc7a34" stroke-width="1"/>
<rect x="1003.3" y="256.5" width="24.200000000000045" height="10.199999999999989" fill="none" stroke="#101010" stroke-width="0.9" rx="0"/>
<rect x="1008.3" y="258.8" width="14.200000000000045" height="5.599999999999966" fill="none" stroke="#101010" stroke-width="0.9" rx="0"/>
<text x="1015.4" y="262.90000000000003" font-size="3.6" fill="#0a0a0a" font-weight="bold" text-anchor="middle" font-family="Liberation Sans" style="white-space:pre"  stroke="#0a0a0a" stroke-width="0.18">5A</text>
<text x="1004.5999999999999" y="261.6" font-size="3.2" fill="#0a0a0a" font-weight="bold" text-anchor="start" font-family="Liberation Sans" style="white-space:pre"  stroke="#0a0a0a" stroke-width="0.18">1</text>
<text x="1024.7" y="261.6" font-size="3.2" fill="#0a0a0a" font-weight="bold" text-anchor="start" font-family="Liberation Sans" style="white-space:pre"  stroke="#0a0a0a" stroke-width="0.18">2</text>
<text x="1015.4" y="248.7" font-size="4.8" fill="#0a0a0a" font-weight="bold" text-anchor="middle" font-family="Liberation Sans" style="white-space:pre"  stroke="#0a0a0a" stroke-width="0.18">F-022</text>
<path d="M1050.3,275.9 L1050.3,258.5 Q1050.3,256.5 1052.3,256.5 L1067.7,256.5 Q1069.7,256.5 1069.7,258.5 L1069.7,275.9 Z" fill="none" stroke="#101010" stroke-width="0.9"/>
<line x1="1060.0" y1="256.5" x2="1060.0" y2="275.9" stroke="#101010" stroke-width="1.1"/>
<path d="M1053.15,275.9 L1055.15,278.4 L1055.95,274.9" fill="none" stroke="#101010" stroke-width="0.7"/>
<path d="M1062.85,275.9 L1064.85,278.4 L1065.6499999999999,274.9" fill="none" stroke="#101010" stroke-width="0.7"/>
<text x="1051.8" y="262.8" font-size="3.6" fill="#0a0a0a" font-weight="bold" text-anchor="start" font-family="Liberation Sans" style="white-space:pre"  stroke="#0a0a0a" stroke-width="0.18">41</text>
<text x="1063.5" y="262.8" font-size="3.6" fill="#0a0a0a" font-weight="bold" text-anchor="start" font-family="Liberation Sans" style="white-space:pre"  stroke="#0a0a0a" stroke-width="0.18">41</text>
<text x="1051.8" y="272.2" font-size="3.6" fill="#0a0a0a" font-weight="bold" text-anchor="start" font-family="Liberation Sans" style="white-space:pre"  stroke="#0a0a0a" stroke-width="0.18">45</text>
<text x="1063.5" y="272.2" font-size="3.6" fill="#0a0a0a" font-weight="bold" text-anchor="start" font-family="Liberation Sans" style="white-space:pre"  stroke="#0a0a0a" stroke-width="0.18">45</text>
<text x="1041" y="257.2" font-size="3.8" fill="#0a0a0a" font-weight="bold" text-anchor="start" font-family="Liberation Sans" style="white-space:pre"  stroke="#0a0a0a" stroke-width="0.18">H-008</text>
<text x="1071" y="279.59999999999997" font-size="3.8" fill="#0a0a0a" font-weight="bold" text-anchor="start" font-family="Liberation Sans" style="white-space:pre"  stroke="#0a0a0a" stroke-width="0.18">H-008</text>
<polyline points="946.7,200.3 961,280.2" fill="none" stroke="#cc7a34" stroke-width="1"/>
<polyline points="961,280.2 1088.6,280.2 1088.6,295.2 1069.7,295.2" fill="none" stroke="#cc7a34" stroke-width="1"/>
<rect x="969.632" y="277.59999999999997" width="28.736000000000104" height="5.2000000000000455" fill="#fff"/>
<text x="984" y="281.9" font-size="4.6" fill="#0a0a0a" font-weight="bold" text-anchor="middle" font-family="Liberation Sans" style="white-space:pre"  stroke="#0a0a0a" stroke-width="0.18">S074 OR 0.8</text>
<polyline points="1027.5,295.2 1050.3,295.2" fill="none" stroke="#cc7a34" stroke-width="1"/>
<polyline points="1003.3,295.2 993.7,295.2 993.7,304.3 1050.3,304.3" fill="none" stroke="#cc7a34" stroke-width="1"/>
<rect x="1003.3" y="290.2" width="24.200000000000045" height="10.199999999999989" fill="none" stroke="#101010" stroke-width="0.9" rx="0"/>
<rect x="1008.3" y="292.5" width="14.200000000000045" height="5.599999999999966" fill="none" stroke="#101010" stroke-width="0.9" rx="0"/>
<text x="1015.4" y="296.59999999999997" font-size="3.6" fill="#0a0a0a" font-weight="bold" text-anchor="middle" font-family="Liberation Sans" style="white-space:pre"  stroke="#0a0a0a" stroke-width="0.18">5A</text>
<text x="1004.5999999999999" y="295.29999999999995" font-size="3.2" fill="#0a0a0a" font-weight="bold" text-anchor="start" font-family="Liberation Sans" style="white-space:pre"  stroke="#0a0a0a" stroke-width="0.18">1</text>
<text x="1024.7" y="295.29999999999995" font-size="3.2" fill="#0a0a0a" font-weight="bold" text-anchor="start" font-family="Liberation Sans" style="white-space:pre"  stroke="#0a0a0a" stroke-width="0.18">2</text>
<text x="1015.4" y="288.0" font-size="4.8" fill="#0a0a0a" font-weight="bold" text-anchor="middle" font-family="Liberation Sans" style="white-space:pre"  stroke="#0a0a0a" stroke-width="0.18">F-023</text>
<path d="M1050.3,309.3 L1050.3,292.2 Q1050.3,290.2 1052.3,290.2 L1067.7,290.2 Q1069.7,290.2 1069.7,292.2 L1069.7,309.3 Z" fill="none" stroke="#101010" stroke-width="0.9"/>
<line x1="1060.0" y1="290.2" x2="1060.0" y2="309.3" stroke="#101010" stroke-width="1.1"/>
<path d="M1053.15,309.3 L1055.15,311.8 L1055.95,308.3" fill="none" stroke="#101010" stroke-width="0.7"/>
<path d="M1062.85,309.3 L1064.85,311.8 L1065.6499999999999,308.3" fill="none" stroke="#101010" stroke-width="0.7"/>
<text x="1051.8" y="296.5" font-size="3.6" fill="#0a0a0a" font-weight="bold" text-anchor="start" font-family="Liberation Sans" style="white-space:pre"  stroke="#0a0a0a" stroke-width="0.18">41</text>
<text x="1063.5" y="296.5" font-size="3.6" fill="#0a0a0a" font-weight="bold" text-anchor="start" font-family="Liberation Sans" style="white-space:pre"  stroke="#0a0a0a" stroke-width="0.18">41</text>
<text x="1051.8" y="305.6" font-size="3.6" fill="#0a0a0a" font-weight="bold" text-anchor="start" font-family="Liberation Sans" style="white-space:pre"  stroke="#0a0a0a" stroke-width="0.18">45</text>
<text x="1063.5" y="305.6" font-size="3.6" fill="#0a0a0a" font-weight="bold" text-anchor="start" font-family="Liberation Sans" style="white-space:pre"  stroke="#0a0a0a" stroke-width="0.18">45</text>
<text x="1041" y="290.9" font-size="3.8" fill="#0a0a0a" font-weight="bold" text-anchor="start" font-family="Liberation Sans" style="white-space:pre"  stroke="#0a0a0a" stroke-width="0.18">H-008</text>
<text x="1071" y="313.0" font-size="3.8" fill="#0a0a0a" font-weight="bold" text-anchor="start" font-family="Liberation Sans" style="white-space:pre"  stroke="#0a0a0a" stroke-width="0.18">H-008</text>
<polyline points="946.7,314 1088.6,314 1088.6,323.2 1069.7,323.2" fill="none" stroke="#cc7a34" stroke-width="1"/>
<rect x="969.632" y="311.4" width="28.736000000000104" height="5.2000000000000455" fill="#fff"/>
<text x="984" y="315.7" font-size="4.6" fill="#0a0a0a" font-weight="bold" text-anchor="middle" font-family="Liberation Sans" style="white-space:pre"  stroke="#0a0a0a" stroke-width="0.18">S078 OR 0.8</text>
<polyline points="1027.5,323.2 1050.3,323.2" fill="none" stroke="#cc7a34" stroke-width="1"/>
<polyline points="1003.3,323.2 993.7,323.2 993.7,332.3 1050.3,332.3" fill="none" stroke="#cc7a34" stroke-width="1"/>
<rect x="1003.3" y="318.2" width="24.200000000000045" height="10.199999999999989" fill="none" stroke="#101010" stroke-width="0.9" rx="0"/>
<rect x="1008.3" y="320.5" width="14.200000000000045" height="5.599999999999966" fill="none" stroke="#101010" stroke-width="0.9" rx="0"/>
<text x="1015.4" y="324.59999999999997" font-size="3.6" fill="#0a0a0a" font-weight="bold" text-anchor="middle" font-family="Liberation Sans" style="white-space:pre"  stroke="#0a0a0a" stroke-width="0.18">5A</text>
<text x="1004.5999999999999" y="323.29999999999995" font-size="3.2" fill="#0a0a0a" font-weight="bold" text-anchor="start" font-family="Liberation Sans" style="white-space:pre"  stroke="#0a0a0a" stroke-width="0.18">1</text>
<text x="1024.7" y="323.29999999999995" font-size="3.2" fill="#0a0a0a" font-weight="bold" text-anchor="start" font-family="Liberation Sans" style="white-space:pre"  stroke="#0a0a0a" stroke-width="0.18">2</text>
<text x="1015.4" y="311.9" font-size="4.8" fill="#0a0a0a" font-weight="bold" text-anchor="middle" font-family="Liberation Sans" style="white-space:pre"  stroke="#0a0a0a" stroke-width="0.18">F-024</text>
<path d="M1050.3,337.3 L1050.3,320.2 Q1050.3,318.2 1052.3,318.2 L1067.7,318.2 Q1069.7,318.2 1069.7,320.2 L1069.7,337.3 Z" fill="none" stroke="#101010" stroke-width="0.9"/>
<line x1="1060.0" y1="318.2" x2="1060.0" y2="337.3" stroke="#101010" stroke-width="1.1"/>
<path d="M1053.15,337.3 L1055.15,339.8 L1055.95,336.3" fill="none" stroke="#101010" stroke-width="0.7"/>
<path d="M1062.85,337.3 L1064.85,339.8 L1065.6499999999999,336.3" fill="none" stroke="#101010" stroke-width="0.7"/>
<text x="1051.8" y="324.5" font-size="3.6" fill="#0a0a0a" font-weight="bold" text-anchor="start" font-family="Liberation Sans" style="white-space:pre"  stroke="#0a0a0a" stroke-width="0.18">41</text>
<text x="1063.5" y="324.5" font-size="3.6" fill="#0a0a0a" font-weight="bold" text-anchor="start" font-family="Liberation Sans" style="white-space:pre"  stroke="#0a0a0a" stroke-width="0.18">41</text>
<text x="1051.8" y="333.6" font-size="3.6" fill="#0a0a0a" font-weight="bold" text-anchor="start" font-family="Liberation Sans" style="white-space:pre"  stroke="#0a0a0a" stroke-width="0.18">45</text>
<text x="1063.5" y="333.6" font-size="3.6" fill="#0a0a0a" font-weight="bold" text-anchor="start" font-family="Liberation Sans" style="white-space:pre"  stroke="#0a0a0a" stroke-width="0.18">45</text>
<text x="1041" y="318.9" font-size="3.8" fill="#0a0a0a" font-weight="bold" text-anchor="start" font-family="Liberation Sans" style="white-space:pre"  stroke="#0a0a0a" stroke-width="0.18">H-008</text>
<text x="1071" y="341.0" font-size="3.8" fill="#0a0a0a" font-weight="bold" text-anchor="start" font-family="Liberation Sans" style="white-space:pre"  stroke="#0a0a0a" stroke-width="0.18">H-008</text>
<circle cx="946.7" cy="200.3" r="2.8" fill="#e08a3a"/>
<polyline points="1069.7,176.4 1239.5,176.4" fill="none" stroke="#cc7a34" stroke-width="1"/>
<rect x="1094.132" y="173.8" width="28.735999999999876" height="5.199999999999989" fill="#fff"/>
<text x="1108.5" y="178.1" font-size="4.6" fill="#0a0a0a" font-weight="bold" text-anchor="middle" font-family="Liberation Sans" style="white-space:pre"  stroke="#0a0a0a" stroke-width="0.18">S140 OR 0.8</text>
<polyline points="1069.7,209.8 1135.2,209.8" fill="none" stroke="#cc7a34" stroke-width="1"/>
<rect x="1090.332" y="207.20000000000002" width="28.735999999999876" height="5.199999999999989" fill="#fff"/>
<text x="1104.7" y="211.5" font-size="4.6" fill="#0a0a0a" font-weight="bold" text-anchor="middle" font-family="Liberation Sans" style="white-space:pre"  stroke="#0a0a0a" stroke-width="0.18">S063 OR 0.8</text>
<polyline points="1135.2,209.8 1146,200.4 1239.5,200.4" fill="none" stroke="#cc7a34" stroke-width="1"/>
<polyline points="1135.2,209.8 1146,214 1239.5,214" fill="none" stroke="#cc7a34" stroke-width="1"/>
<circle cx="1135.2" cy="209.8" r="2.3" fill="#e08a3a"/>
<text x="1141" y="211.5" font-size="4.6" fill="#0a0a0a" font-weight="bold" text-anchor="start" font-family="Liberation Sans" style="white-space:pre"  stroke="#0a0a0a" stroke-width="0.18">SP-013</text>
<rect x="1175.332" y="197.8" width="28.735999999999876" height="5.199999999999989" fill="#fff"/>
<text x="1189.7" y="202.1" font-size="4.6" fill="#0a0a0a" font-weight="bold" text-anchor="middle" font-family="Liberation Sans" style="white-space:pre"  stroke="#0a0a0a" stroke-width="0.18">S064 OR 0.8</text>
<rect x="1175.332" y="211.4" width="28.735999999999876" height="5.199999999999989" fill="#fff"/>
<text x="1189.7" y="215.7" font-size="4.6" fill="#0a0a0a" font-weight="bold" text-anchor="middle" font-family="Liberation Sans" style="white-space:pre"  stroke="#0a0a0a" stroke-width="0.18">S065 OR 0.8</text>
<polyline points="1069.7,237.8 1135.2,237.8" fill="none" stroke="#cc7a34" stroke-width="1"/>
<rect x="1090.332" y="235.20000000000002" width="28.735999999999876" height="5.199999999999989" fill="#fff"/>
<text x="1104.7" y="239.5" font-size="4.6" fill="#0a0a0a" font-weight="bold" text-anchor="middle" font-family="Liberation Sans" style="white-space:pre"  stroke="#0a0a0a" stroke-width="0.18">S067 OR 0.8</text>
<polyline points="1135.2,237.8 1146,228.3 1239.5,228.3" fill="none" stroke="#cc7a34" stroke-width="1"/>
<polyline points="1135.2,237.8 1146,247 1239.5,247" fill="none" stroke="#cc7a34" stroke-width="1"/>
<circle cx="1135.2" cy="237.8" r="2.3" fill="#e08a3a"/>
<text x="1141" y="239.5" font-size="4.6" fill="#0a0a0a" font-weight="bold" text-anchor="start" font-family="Liberation Sans" style="white-space:pre"  stroke="#0a0a0a" stroke-width="0.18">SP-012</text>
<rect x="1175.332" y="225.70000000000002" width="28.735999999999876" height="5.199999999999989" fill="#fff"/>
<text x="1189.7" y="230.0" font-size="4.6" fill="#0a0a0a" font-weight="bold" text-anchor="middle" font-family="Liberation Sans" style="white-space:pre"  stroke="#0a0a0a" stroke-width="0.18">S068 OR 0.8</text>
<rect x="1175.332" y="244.4" width="28.735999999999876" height="5.199999999999989" fill="#fff"/>
<text x="1189.7" y="248.7" font-size="4.6" fill="#0a0a0a" font-weight="bold" text-anchor="middle" font-family="Liberation Sans" style="white-space:pre"  stroke="#0a0a0a" stroke-width="0.18">S069 OR 0.8</text>
<polyline points="1069.7,270.9 1135.2,270.9" fill="none" stroke="#cc7a34" stroke-width="1"/>
<rect x="1090.332" y="268.29999999999995" width="28.735999999999876" height="5.2000000000000455" fill="#fff"/>
<text x="1104.7" y="272.59999999999997" font-size="4.6" fill="#0a0a0a" font-weight="bold" text-anchor="middle" font-family="Liberation Sans" style="white-space:pre"  stroke="#0a0a0a" stroke-width="0.18">S071 OR 0.8</text>
<polyline points="1135.2,270.9 1146,262 1239.5,262" fill="none" stroke="#cc7a34" stroke-width="1"/>
<polyline points="1135.2,270.9 1146,280 1239.5,280" fill="none" stroke="#cc7a34" stroke-width="1"/>
<circle cx="1135.2" cy="270.9" r="2.3" fill="#e08a3a"/>
<text x="1141" y="272.59999999999997" font-size="4.6" fill="#0a0a0a" font-weight="bold" text-anchor="start" font-family="Liberation Sans" style="white-space:pre"  stroke="#0a0a0a" stroke-width="0.18">SP-010</text>
<rect x="1175.332" y="259.4" width="28.735999999999876" height="5.2000000000000455" fill="#fff"/>
<text x="1189.7" y="263.7" font-size="4.6" fill="#0a0a0a" font-weight="bold" text-anchor="middle" font-family="Liberation Sans" style="white-space:pre"  stroke="#0a0a0a" stroke-width="0.18">S072 OR 0.8</text>
<rect x="1175.332" y="277.4" width="28.735999999999876" height="5.2000000000000455" fill="#fff"/>
<text x="1189.7" y="281.7" font-size="4.6" fill="#0a0a0a" font-weight="bold" text-anchor="middle" font-family="Liberation Sans" style="white-space:pre"  stroke="#0a0a0a" stroke-width="0.18">S073 OR 0.8</text>
<polyline points="1069.7,304.3 1135.2,304.3" fill="none" stroke="#cc7a34" stroke-width="1"/>
<rect x="1090.332" y="301.7" width="28.735999999999876" height="5.2000000000000455" fill="#fff"/>
<text x="1104.7" y="306.0" font-size="4.6" fill="#0a0a0a" font-weight="bold" text-anchor="middle" font-family="Liberation Sans" style="white-space:pre"  stroke="#0a0a0a" stroke-width="0.18">S075 OR 0.8</text>
<polyline points="1135.2,304.3 1146,295 1239.5,295" fill="none" stroke="#cc7a34" stroke-width="1"/>
<polyline points="1135.2,304.3 1146,309 1239.5,309" fill="none" stroke="#cc7a34" stroke-width="1"/>
<circle cx="1135.2" cy="304.3" r="2.3" fill="#e08a3a"/>
<text x="1141" y="306.0" font-size="4.6" fill="#0a0a0a" font-weight="bold" text-anchor="start" font-family="Liberation Sans" style="white-space:pre"  stroke="#0a0a0a" stroke-width="0.18">SP-014</text>
<rect x="1175.332" y="292.4" width="28.735999999999876" height="5.2000000000000455" fill="#fff"/>
<text x="1189.7" y="296.7" font-size="4.6" fill="#0a0a0a" font-weight="bold" text-anchor="middle" font-family="Liberation Sans" style="white-space:pre"  stroke="#0a0a0a" stroke-width="0.18">S076 OR 0.8</text>
<rect x="1175.332" y="306.4" width="28.735999999999876" height="5.2000000000000455" fill="#fff"/>
<text x="1189.7" y="310.7" font-size="4.6" fill="#0a0a0a" font-weight="bold" text-anchor="middle" font-family="Liberation Sans" style="white-space:pre"  stroke="#0a0a0a" stroke-width="0.18">S077 OR 0.8</text>
<polyline points="1069.7,332.3 1107,332.3 1107,323 1239.5,323" fill="none" stroke="#cc7a34" stroke-width="1"/>
<rect x="1175.332" y="320.4" width="28.735999999999876" height="5.2000000000000455" fill="#fff"/>
<text x="1189.7" y="324.7" font-size="4.6" fill="#0a0a0a" font-weight="bold" text-anchor="middle" font-family="Liberation Sans" style="white-space:pre"  stroke="#0a0a0a" stroke-width="0.18">S079 OR 0.8</text>
<text x="908" y="332.7" font-size="4.6" fill="#0a0a0a" font-weight="bold" text-anchor="start" font-family="Liberation Sans" style="white-space:pre"  stroke="#0a0a0a" stroke-width="0.18">SH06: C-6</text>
<path d="M933.3,330.1 L937.8,332.3 L933.3,334.5 L934.5,332.3 Z" fill="#111"/>
<polyline points="937,332.3 979.3,332.3 979.3,342.2 1135.3,342.2 1135.3,337.3 1239.5,337.3" fill="none" stroke="#101010" stroke-width="1"/>
<rect x="1043.632" y="339.59999999999997" width="28.735999999999876" height="5.2000000000000455" fill="#fff"/>
<text x="1058" y="343.9" font-size="4.6" fill="#0a0a0a" font-weight="bold" text-anchor="middle" font-family="Liberation Sans" style="white-space:pre"  stroke="#0a0a0a" stroke-width="0.18">K150 WH 0.8</text>
<text x="908" y="352.3" font-size="4.6" fill="#0a0a0a" font-weight="bold" text-anchor="start" font-family="Liberation Sans" style="white-space:pre"  stroke="#0a0a0a" stroke-width="0.18">SH06: B-6</text>
<path d="M933.3,349.40000000000003 L937.8,351.6 L933.3,353.8 L934.5,351.6 Z" fill="#111"/>
<polyline points="937,351.6 1239.5,351.6" fill="none" stroke="#101010" stroke-width="1"/>
<rect x="1043.632" y="349.0" width="28.735999999999876" height="5.2000000000000455" fill="#fff"/>
<text x="1058" y="353.3" font-size="4.6" fill="#0a0a0a" font-weight="bold" text-anchor="middle" font-family="Liberation Sans" style="white-space:pre"  stroke="#0a0a0a" stroke-width="0.18">K170 WH 0.8</text>
<text x="908" y="371.2" font-size="4.6" fill="#0a0a0a" font-weight="bold" text-anchor="start" font-family="Liberation Sans" style="white-space:pre"  stroke="#0a0a0a" stroke-width="0.18">SH06: B-1</text>
<path d="M933.3,368.3 L937.8,370.5 L933.3,372.7 L934.5,370.5 Z" fill="#111"/>
<polyline points="937,370.5 1239.5,370.5" fill="none" stroke="#101010" stroke-width="1"/>
<rect x="1043.632" y="367.9" width="28.735999999999876" height="5.2000000000000455" fill="#fff"/>
<text x="1058" y="372.2" font-size="4.6" fill="#0a0a0a" font-weight="bold" text-anchor="middle" font-family="Liberation Sans" style="white-space:pre"  stroke="#0a0a0a" stroke-width="0.18">B300 GY 0.8</text>
<text x="908" y="390.2" font-size="4.6" fill="#0a0a0a" font-weight="bold" text-anchor="start" font-family="Liberation Sans" style="white-space:pre"  stroke="#0a0a0a" stroke-width="0.18">SH06: A-6</text>
<path d="M933.3,387.3 L937.8,389.5 L933.3,391.7 L934.5,389.5 Z" fill="#111"/>
<polyline points="937,389.5 1239.5,389.5" fill="none" stroke="#101010" stroke-width="1"/>
<rect x="1043.632" y="386.9" width="28.735999999999876" height="5.2000000000000455" fill="#fff"/>
<text x="1058" y="391.2" font-size="4.6" fill="#0a0a0a" font-weight="bold" text-anchor="middle" font-family="Liberation Sans" style="white-space:pre"  stroke="#0a0a0a" stroke-width="0.18">L070 WH 0.8</text>
<text x="908" y="409.0" font-size="4.6" fill="#0a0a0a" font-weight="bold" text-anchor="start" font-family="Liberation Sans" style="white-space:pre"  stroke="#0a0a0a" stroke-width="0.18">SH06: A-6</text>
<path d="M933.3,406.1 L937.8,408.3 L933.3,410.5 L934.5,408.3 Z" fill="#111"/>
<polyline points="937,408.3 1239.5,408.3" fill="none" stroke="#101010" stroke-width="1"/>
<rect x="1043.632" y="405.7" width="28.735999999999876" height="5.2000000000000455" fill="#fff"/>
<text x="1058" y="410.0" font-size="4.6" fill="#0a0a0a" font-weight="bold" text-anchor="middle" font-family="Liberation Sans" style="white-space:pre"  stroke="#0a0a0a" stroke-width="0.18">L060 WH 0.8</text>
<text x="908" y="427.9" font-size="4.6" fill="#0a0a0a" font-weight="bold" text-anchor="start" font-family="Liberation Sans" style="white-space:pre"  stroke="#0a0a0a" stroke-width="0.18">SH06: A-1</text>
<path d="M933.3,425.0 L937.8,427.2 L933.3,429.4 L934.5,427.2 Z" fill="#111"/>
<polyline points="937,427.2 1239.5,427.2" fill="none" stroke="#101010" stroke-width="1"/>
<rect x="1043.632" y="424.59999999999997" width="28.735999999999876" height="5.2000000000000455" fill="#fff"/>
<text x="1058" y="428.9" font-size="4.6" fill="#0a0a0a" font-weight="bold" text-anchor="middle" font-family="Liberation Sans" style="white-space:pre"  stroke="#0a0a0a" stroke-width="0.18">B030 GY 0.8</text>
<text x="909" y="446.7" font-size="4.6" fill="#0a0a0a" font-weight="bold" text-anchor="start" font-family="Liberation Sans" style="white-space:pre"  stroke="#0a0a0a" stroke-width="0.18">SH2: C-1</text>
<path d="M933.3,444.0 L937.8,446.2 L933.3,448.4 L934.5,446.2 Z" fill="#111"/>
<polyline points="937,446.2 1239.5,446.2" fill="none" stroke="#2a7898" stroke-width="1"/>
<rect x="990.632" y="443.59999999999997" width="28.736000000000104" height="5.2000000000000455" fill="#fff"/>
<text x="1005" y="447.9" font-size="4.6" fill="#0a0a0a" font-weight="bold" text-anchor="middle" font-family="Liberation Sans" style="white-space:pre"  stroke="#0a0a0a" stroke-width="0.18">S147 YE 0.8</text>
<rect x="1151.632" y="443.59999999999997" width="28.735999999999876" height="5.2000000000000455" fill="#fff"/>
<text x="1166" y="447.9" font-size="4.6" fill="#0a0a0a" font-weight="bold" text-anchor="middle" font-family="Liberation Sans" style="white-space:pre"  stroke="#0a0a0a" stroke-width="0.18">S116 YE 0.8</text>
<path d="M1073.7,450.7 L1073.7,442.8 Q1073.7,440.8 1075.7,440.8 L1091.4,440.8 Q1093.4,440.8 1093.4,442.8 L1093.4,450.7 Z" fill="none" stroke="#101010" stroke-width="0.9"/>
<line x1="1083.5500000000002" y1="440.8" x2="1083.5500000000002" y2="450.7" stroke="#101010" stroke-width="1.1"/>
<path d="M1076.625,450.7 L1078.625,453.2 L1079.425,449.7" fill="none" stroke="#101010" stroke-width="0.7"/>
<path d="M1086.4750000000001,450.7 L1088.4750000000001,453.2 L1089.275,449.7" fill="none" stroke="#101010" stroke-width="0.7"/>
<text x="1075.5" y="447.5" font-size="3.6" fill="#0a0a0a" font-weight="bold" text-anchor="start" font-family="Liberation Sans" style="white-space:pre"  stroke="#0a0a0a" stroke-width="0.18">15</text>
<text x="1086" y="447.5" font-size="3.6" fill="#0a0a0a" font-weight="bold" text-anchor="start" font-family="Liberation Sans" style="white-space:pre"  stroke="#0a0a0a" stroke-width="0.18">15</text>
<text x="1061" y="444.7" font-size="3.8" fill="#0a0a0a" font-weight="bold" text-anchor="start" font-family="Liberation Sans" style="white-space:pre"  stroke="#0a0a0a" stroke-width="0.18">H003A</text>
<text x="1095" y="454.7" font-size="3.8" fill="#0a0a0a" font-weight="bold" text-anchor="start" font-family="Liberation Sans" style="white-space:pre"  stroke="#0a0a0a" stroke-width="0.18">H003B</text>
<text x="908" y="479.7" font-size="4.6" fill="#0a0a0a" font-weight="bold" text-anchor="start" font-family="Liberation Sans" style="white-space:pre"  stroke="#0a0a0a" stroke-width="0.18">SH05: B-6</text>
<path d="M933.3,476.8 L937.8,479 L933.3,481.2 L934.5,479 Z" fill="#111"/>
<polyline points="937,479 1253.3,479" fill="none" stroke="#101010" stroke-width="1"/>
<rect x="990.632" y="476.4" width="28.736000000000104" height="5.2000000000000455" fill="#fff"/>
<text x="1005" y="480.7" font-size="4.6" fill="#0a0a0a" font-weight="bold" text-anchor="middle" font-family="Liberation Sans" style="white-space:pre"  stroke="#0a0a0a" stroke-width="0.18">A047 PK 0.8</text>
<rect x="1154.632" y="476.4" width="28.735999999999876" height="5.2000000000000455" fill="#fff"/>
<text x="1169" y="480.7" font-size="4.6" fill="#0a0a0a" font-weight="bold" text-anchor="middle" font-family="Liberation Sans" style="white-space:pre"  stroke="#0a0a0a" stroke-width="0.18">A048 PK 0.8</text>
<path d="M1073.7,484 L1073.7,476 Q1073.7,474 1075.7,474 L1091.4,474 Q1093.4,474 1093.4,476 L1093.4,484 Z" fill="none" stroke="#101010" stroke-width="0.9"/>
<line x1="1083.5500000000002" y1="474" x2="1083.5500000000002" y2="484" stroke="#101010" stroke-width="1.1"/>
<path d="M1076.625,484 L1078.625,486.5 L1079.425,483" fill="none" stroke="#101010" stroke-width="0.7"/>
<path d="M1086.4750000000001,484 L1088.4750000000001,486.5 L1089.275,483" fill="none" stroke="#101010" stroke-width="0.7"/>
<text x="1076" y="480.3" font-size="3.6" fill="#0a0a0a" font-weight="bold" text-anchor="start" font-family="Liberation Sans" style="white-space:pre"  stroke="#0a0a0a" stroke-width="0.18">2</text>
<text x="1088" y="480.3" font-size="3.6" fill="#0a0a0a" font-weight="bold" text-anchor="start" font-family="Liberation Sans" style="white-space:pre"  stroke="#0a0a0a" stroke-width="0.18">2</text>
<text x="1095" y="477.7" font-size="3.8" fill="#0a0a0a" font-weight="bold" text-anchor="start" font-family="Liberation Sans" style="white-space:pre"  stroke="#0a0a0a" stroke-width="0.18">H003A</text>
<text x="1061" y="488.7" font-size="3.8" fill="#0a0a0a" font-weight="bold" text-anchor="start" font-family="Liberation Sans" style="white-space:pre"  stroke="#0a0a0a" stroke-width="0.18">H003B</text>
<polyline points="1244.5,21 1244.5,455 1320.5,455 1320.5,21 1244.5,21" fill="none" stroke="#111" stroke-width="1.1"/>
<text x="1282" y="15" font-size="5" fill="#0a0a0a" font-weight="bold" text-anchor="middle" font-family="Liberation Sans" style="white-space:pre"  stroke="#0a0a0a" stroke-width="0.18">A-002</text>
<text x="1281" y="21" font-size="5" fill="#0a0a0a" font-weight="bold" text-anchor="middle" font-family="Liberation Sans" style="white-space:pre"  stroke="#0a0a0a" stroke-width="0.18">UCM</text>
<path d="M1280,451 L1283,455 L1281,459" fill="none" stroke="#101010" stroke-width="0.8"/>
<path d="M1244.5,21 L1241.5,21 Q1239.5,21 1239.5,23 L1239.5,46.4 L1241.5,49.4 L1244.5,49.4" fill="#fff" stroke="#000" stroke-width="1.3"/>
<path d="M1240.5,48.4 L1242.5,51.9" stroke="#111" stroke-width="1"/>
<text x="1239" y="25.2" font-size="3.4" fill="#0a0a0a" font-weight="bold" text-anchor="end" font-family="Liberation Sans" style="white-space:pre"  stroke="#0a0a0a" stroke-width="0.18">7</text>
<text x="1246" y="27.3" font-size="3.4" fill="#0a0a0a" font-weight="bold" text-anchor="start" font-family="Liberation Sans" style="white-space:pre"  stroke="#0a0a0a" stroke-width="0.18">DOUTS (UR1)</text>
<text x="1239" y="34.2" font-size="3.4" fill="#0a0a0a" font-weight="bold" text-anchor="end" font-family="Liberation Sans" style="white-space:pre"  stroke="#0a0a0a" stroke-width="0.18">8</text>
<text x="1246" y="36.3" font-size="3.4" fill="#0a0a0a" font-weight="bold" text-anchor="start" font-family="Liberation Sans" style="white-space:pre"  stroke="#0a0a0a" stroke-width="0.18">DOUTS (UR2)</text>
<text x="1241" y="56.800000000000004" font-size="3.8" fill="#0a0a0a" font-weight="bold" text-anchor="end" font-family="Liberation Sans" style="white-space:pre"  stroke="#0a0a0a" stroke-width="0.18">H-019</text>
<path d="M1244.5,72.8 L1241.5,72.8 Q1239.5,72.8 1239.5,74.8 L1239.5,179 L1241.5,182 L1244.5,182" fill="#fff" stroke="#000" stroke-width="1.3"/>
<path d="M1240.5,181 L1242.5,184.5" stroke="#111" stroke-width="1"/>
<text x="1239" y="77.2" font-size="3.4" fill="#0a0a0a" font-weight="bold" text-anchor="end" font-family="Liberation Sans" style="white-space:pre"  stroke="#0a0a0a" stroke-width="0.18">20</text>
<text x="1246" y="79.3" font-size="3.4" fill="#0a0a0a" font-weight="bold" text-anchor="start" font-family="Liberation Sans" style="white-space:pre"  stroke="#0a0a0a" stroke-width="0.18">UP</text>
<text x="1239" y="124.2" font-size="3.4" fill="#0a0a0a" font-weight="bold" text-anchor="end" font-family="Liberation Sans" style="white-space:pre"  stroke="#0a0a0a" stroke-width="0.18">26</text>
<text x="1246" y="126.3" font-size="3.4" fill="#0a0a0a" font-weight="bold" text-anchor="start" font-family="Liberation Sans" style="white-space:pre"  stroke="#0a0a0a" stroke-width="0.18">SENSOR POWER (UR)</text>
<text x="1239" y="175.6" font-size="3.4" fill="#0a0a0a" font-weight="bold" text-anchor="end" font-family="Liberation Sans" style="white-space:pre"  stroke="#0a0a0a" stroke-width="0.18">14</text>
<text x="1246" y="177.70000000000002" font-size="3.4" fill="#0a0a0a" font-weight="bold" text-anchor="start" font-family="Liberation Sans" style="white-space:pre"  stroke="#0a0a0a" stroke-width="0.18">SEN. GR. GN</text>
<text x="1241" y="188.2" font-size="3.8" fill="#0a0a0a" font-weight="bold" text-anchor="end" font-family="Liberation Sans" style="white-space:pre"  stroke="#0a0a0a" stroke-width="0.18">H-014</text>
<path d="M1244.5,195.1 L1241.5,195.1 Q1239.5,195.1 1239.5,197.1 L1239.5,217.3 L1241.5,220.3 L1244.5,220.3" fill="#fff" stroke="#000" stroke-width="1.3"/>
<path d="M1240.5,219.3 L1242.5,222.8" stroke="#111" stroke-width="1"/>
<text x="1239" y="199.6" font-size="3.4" fill="#0a0a0a" font-weight="bold" text-anchor="end" font-family="Liberation Sans" style="white-space:pre"  stroke="#0a0a0a" stroke-width="0.18">7</text>
<text x="1246" y="201.70000000000002" font-size="3.4" fill="#0a0a0a" font-weight="bold" text-anchor="start" font-family="Liberation Sans" style="white-space:pre"  stroke="#0a0a0a" stroke-width="0.18">PUMPS (UP2)</text>
<text x="1239" y="213.2" font-size="3.4" fill="#0a0a0a" font-weight="bold" text-anchor="end" font-family="Liberation Sans" style="white-space:pre"  stroke="#0a0a0a" stroke-width="0.18">12</text>
<text x="1246" y="215.3" font-size="3.4" fill="#0a0a0a" font-weight="bold" text-anchor="start" font-family="Liberation Sans" style="white-space:pre"  stroke="#0a0a0a" stroke-width="0.18">PUMPS (UP2)</text>
<text x="1241" y="223.7" font-size="3.8" fill="#0a0a0a" font-weight="bold" text-anchor="end" font-family="Liberation Sans" style="white-space:pre"  stroke="#0a0a0a" stroke-width="0.18">H-006</text>
<path d="M1244.5,224.4 L1241.5,224.4 Q1239.5,224.4 1239.5,226.4 L1239.5,248.8 L1241.5,251.8 L1244.5,251.8" fill="#fff" stroke="#000" stroke-width="1.3"/>
<path d="M1240.5,250.8 L1242.5,254.3" stroke="#111" stroke-width="1"/>
<text x="1239" y="227.5" font-size="3.4" fill="#0a0a0a" font-weight="bold" text-anchor="end" font-family="Liberation Sans" style="white-space:pre"  stroke="#0a0a0a" stroke-width="0.18">7</text>
<text x="1246" y="229.60000000000002" font-size="3.4" fill="#0a0a0a" font-weight="bold" text-anchor="start" font-family="Liberation Sans" style="white-space:pre"  stroke="#0a0a0a" stroke-width="0.18">MOTORS (UP4)</text>
<text x="1239" y="246.2" font-size="3.4" fill="#0a0a0a" font-weight="bold" text-anchor="end" font-family="Liberation Sans" style="white-space:pre"  stroke="#0a0a0a" stroke-width="0.18">12</text>
<text x="1246" y="248.3" font-size="3.4" fill="#0a0a0a" font-weight="bold" text-anchor="start" font-family="Liberation Sans" style="white-space:pre"  stroke="#0a0a0a" stroke-width="0.18">MOTORS (UP4)</text>
<text x="1241" y="255.7" font-size="3.8" fill="#0a0a0a" font-weight="bold" text-anchor="end" font-family="Liberation Sans" style="white-space:pre"  stroke="#0a0a0a" stroke-width="0.18">H-010</text>
<path d="M1244.5,257 L1241.5,257 Q1239.5,257 1239.5,259 L1239.5,281.3 L1241.5,284.3 L1244.5,284.3" fill="#fff" stroke="#000" stroke-width="1.3"/>
<path d="M1240.5,283.3 L1242.5,286.8" stroke="#111" stroke-width="1"/>
<text x="1239" y="261.2" font-size="3.4" fill="#0a0a0a" font-weight="bold" text-anchor="end" font-family="Liberation Sans" style="white-space:pre"  stroke="#0a0a0a" stroke-width="0.18">8</text>
<text x="1246" y="263.3" font-size="3.4" fill="#0a0a0a" font-weight="bold" text-anchor="start" font-family="Liberation Sans" style="white-space:pre"  stroke="#0a0a0a" stroke-width="0.18">TILT/ANGLE (UP4)</text>
<text x="1239" y="279.2" font-size="3.4" fill="#0a0a0a" font-weight="bold" text-anchor="end" font-family="Liberation Sans" style="white-space:pre"  stroke="#0a0a0a" stroke-width="0.18">9</text>
<text x="1246" y="281.3" font-size="3.4" fill="#0a0a0a" font-weight="bold" text-anchor="start" font-family="Liberation Sans" style="white-space:pre"  stroke="#0a0a0a" stroke-width="0.18">TILT/ANGLE (UP4)</text>
<text x="1241" y="288.2" font-size="3.8" fill="#0a0a0a" font-weight="bold" text-anchor="end" font-family="Liberation Sans" style="white-space:pre"  stroke="#0a0a0a" stroke-width="0.18">H-027</text>
<path d="M1244.5,290.3 L1241.5,290.3 Q1239.5,290.3 1239.5,292.3 L1239.5,310.4 L1241.5,313.4 L1244.5,313.4" fill="#fff" stroke="#000" stroke-width="1.3"/>
<path d="M1240.5,312.4 L1242.5,315.9" stroke="#111" stroke-width="1"/>
<text x="1239" y="294.2" font-size="3.4" fill="#0a0a0a" font-weight="bold" text-anchor="end" font-family="Liberation Sans" style="white-space:pre"  stroke="#0a0a0a" stroke-width="0.18">1</text>
<text x="1246" y="296.3" font-size="3.4" fill="#0a0a0a" font-weight="bold" text-anchor="start" font-family="Liberation Sans" style="white-space:pre"  stroke="#0a0a0a" stroke-width="0.18">RIPPER/LIFT (UP2)</text>
<text x="1239" y="308.2" font-size="3.4" fill="#0a0a0a" font-weight="bold" text-anchor="end" font-family="Liberation Sans" style="white-space:pre"  stroke="#0a0a0a" stroke-width="0.18">8</text>
<text x="1246" y="310.3" font-size="3.4" fill="#0a0a0a" font-weight="bold" text-anchor="start" font-family="Liberation Sans" style="white-space:pre"  stroke="#0a0a0a" stroke-width="0.18">RIPPER/LIFT (UP2)</text>
<text x="1241" y="317.2" font-size="3.8" fill="#0a0a0a" font-weight="bold" text-anchor="end" font-family="Liberation Sans" style="white-space:pre"  stroke="#0a0a0a" stroke-width="0.18">H-031</text>
<path d="M1244.5,317.7 L1241.5,317.7 Q1239.5,317.7 1239.5,319.7 L1239.5,323.2 L1241.5,326.2 L1244.5,326.2" fill="#fff" stroke="#000" stroke-width="1.3"/>
<path d="M1240.5,325.2 L1242.5,328.7" stroke="#111" stroke-width="1"/>
<text x="1239" y="322.2" font-size="3.4" fill="#0a0a0a" font-weight="bold" text-anchor="end" font-family="Liberation Sans" style="white-space:pre"  stroke="#0a0a0a" stroke-width="0.18">7</text>
<text x="1246" y="324.3" font-size="3.4" fill="#0a0a0a" font-weight="bold" text-anchor="start" font-family="Liberation Sans" style="white-space:pre"  stroke="#0a0a0a" stroke-width="0.18">LED DRIVER (LP)</text>
<text x="1241" y="330.2" font-size="3.8" fill="#0a0a0a" font-weight="bold" text-anchor="end" font-family="Liberation Sans" style="white-space:pre"  stroke="#0a0a0a" stroke-width="0.18">H-030</text>
<path d="M1244.5,332.7 L1241.5,332.7 Q1239.5,332.7 1239.5,334.7 L1239.5,352.8 L1241.5,355.8 L1244.5,355.8" fill="#fff" stroke="#000" stroke-width="1.3"/>
<path d="M1240.5,354.8 L1242.5,358.3" stroke="#111" stroke-width="1"/>
<text x="1239" y="336.5" font-size="3.4" fill="#0a0a0a" font-weight="bold" text-anchor="end" font-family="Liberation Sans" style="white-space:pre"  stroke="#0a0a0a" stroke-width="0.18">20</text>
<text x="1246" y="338.6" font-size="3.4" fill="#0a0a0a" font-weight="bold" text-anchor="start" font-family="Liberation Sans" style="white-space:pre"  stroke="#0a0a0a" stroke-width="0.18">TILT RIGHT</text>
<text x="1239" y="350.9" font-size="3.4" fill="#0a0a0a" font-weight="bold" text-anchor="end" font-family="Liberation Sans" style="white-space:pre"  stroke="#0a0a0a" stroke-width="0.18">22</text>
<text x="1246" y="353.0" font-size="3.4" fill="#0a0a0a" font-weight="bold" text-anchor="start" font-family="Liberation Sans" style="white-space:pre"  stroke="#0a0a0a" stroke-width="0.18">TILT LEFT</text>
<text x="1241" y="361.2" font-size="3.8" fill="#0a0a0a" font-weight="bold" text-anchor="end" font-family="Liberation Sans" style="white-space:pre"  stroke="#0a0a0a" stroke-width="0.18">H-028</text>
<path d="M1244.5,365.6 L1241.5,365.6 Q1239.5,365.6 1239.5,367.6 L1239.5,371.5 L1241.5,374.5 L1244.5,374.5" fill="#fff" stroke="#000" stroke-width="1.3"/>
<path d="M1240.5,373.5 L1242.5,377.0" stroke="#111" stroke-width="1"/>
<text x="1239" y="369.7" font-size="3.4" fill="#0a0a0a" font-weight="bold" text-anchor="end" font-family="Liberation Sans" style="white-space:pre"  stroke="#0a0a0a" stroke-width="0.18">20</text>
<text x="1246" y="371.8" font-size="3.4" fill="#0a0a0a" font-weight="bold" text-anchor="start" font-family="Liberation Sans" style="white-space:pre"  stroke="#0a0a0a" stroke-width="0.18">TILT RTN</text>
<text x="1241" y="380.2" font-size="3.8" fill="#0a0a0a" font-weight="bold" text-anchor="end" font-family="Liberation Sans" style="white-space:pre"  stroke="#0a0a0a" stroke-width="0.18">H-033</text>
<path d="M1244.5,384.3 L1241.5,384.3 Q1239.5,384.3 1239.5,386.3 L1239.5,410.7 L1241.5,413.7 L1244.5,413.7" fill="#fff" stroke="#000" stroke-width="1.3"/>
<path d="M1240.5,412.7 L1242.5,416.2" stroke="#111" stroke-width="1"/>
<text x="1239" y="388.7" font-size="3.4" fill="#0a0a0a" font-weight="bold" text-anchor="end" font-family="Liberation Sans" style="white-space:pre"  stroke="#0a0a0a" stroke-width="0.18">7</text>
<text x="1246" y="390.8" font-size="3.4" fill="#0a0a0a" font-weight="bold" text-anchor="start" font-family="Liberation Sans" style="white-space:pre"  stroke="#0a0a0a" stroke-width="0.18">BLADE LIFT</text>
<text x="1239" y="407.5" font-size="3.4" fill="#0a0a0a" font-weight="bold" text-anchor="end" font-family="Liberation Sans" style="white-space:pre"  stroke="#0a0a0a" stroke-width="0.18">9</text>
<text x="1246" y="409.6" font-size="3.4" fill="#0a0a0a" font-weight="bold" text-anchor="start" font-family="Liberation Sans" style="white-space:pre"  stroke="#0a0a0a" stroke-width="0.18">BLADE POWER</text>
<text x="1241" y="419.2" font-size="3.8" fill="#0a0a0a" font-weight="bold" text-anchor="end" font-family="Liberation Sans" style="white-space:pre"  stroke="#0a0a0a" stroke-width="0.18">H-021</text>
<path d="M1244.5,422.3 L1241.5,422.3 Q1239.5,422.3 1239.5,424.3 L1239.5,430 L1241.5,433 L1244.5,433" fill="#fff" stroke="#000" stroke-width="1.3"/>
<path d="M1240.5,432 L1242.5,435.5" stroke="#111" stroke-width="1"/>
<text x="1239" y="426.4" font-size="3.4" fill="#0a0a0a" font-weight="bold" text-anchor="end" font-family="Liberation Sans" style="white-space:pre"  stroke="#0a0a0a" stroke-width="0.18">7</text>
<text x="1246" y="428.5" font-size="3.4" fill="#0a0a0a" font-weight="bold" text-anchor="start" font-family="Liberation Sans" style="white-space:pre"  stroke="#0a0a0a" stroke-width="0.18">LIFT/POWER RTN</text>
<text x="1241" y="437.7" font-size="3.8" fill="#0a0a0a" font-weight="bold" text-anchor="end" font-family="Liberation Sans" style="white-space:pre"  stroke="#0a0a0a" stroke-width="0.18">H-033</text>
<path d="M1244.5,441.3 L1241.5,441.3 Q1239.5,441.3 1239.5,443.3 L1239.5,450 L1241.5,453 L1244.5,453" fill="#fff" stroke="#000" stroke-width="1.3"/>
<path d="M1240.5,452 L1242.5,455.5" stroke="#111" stroke-width="1"/>
<text x="1239" y="445.4" font-size="3.4" fill="#0a0a0a" font-weight="bold" text-anchor="end" font-family="Liberation Sans" style="white-space:pre"  stroke="#0a0a0a" stroke-width="0.18">14</text>
<text x="1246" y="447.5" font-size="3.4" fill="#0a0a0a" font-weight="bold" text-anchor="start" font-family="Liberation Sans" style="white-space:pre"  stroke="#0a0a0a" stroke-width="0.18">CRANK</text>
<text x="1241" y="457.7" font-size="3.8" fill="#0a0a0a" font-weight="bold" text-anchor="end" font-family="Liberation Sans" style="white-space:pre"  stroke="#0a0a0a" stroke-width="0.18">H-017</text>
<path d="M1320.5,21 L1323,21 Q1325,21 1325,23 L1325,28.3 L1323,31.3 L1320.5,31.3" fill="#fff" stroke="#000" stroke-width="1.3"/>
<path d="M1324,30.3 L1322,33.8" stroke="#111" stroke-width="1"/>
<text x="1327" y="34.8" font-size="3.8" fill="#0a0a0a" font-weight="bold" text-anchor="start" font-family="Liberation Sans" style="white-space:pre"  stroke="#0a0a0a" stroke-width="0.18">H-028</text>
<path d="M1320.5,35.3 L1323,35.3 Q1325,35.3 1325,37.3 L1325,42.8 L1323,45.8 L1320.5,45.8" fill="#fff" stroke="#000" stroke-width="1.3"/>
<path d="M1324,44.8 L1322,48.3" stroke="#111" stroke-width="1"/>
<text x="1327" y="49.3" font-size="3.8" fill="#0a0a0a" font-weight="bold" text-anchor="start" font-family="Liberation Sans" style="white-space:pre"  stroke="#0a0a0a" stroke-width="0.18">H-034</text>
<path d="M1320.5,53.9 L1323,53.9 Q1325,53.9 1325,55.9 L1325,61.400000000000006 L1323,64.4 L1320.5,64.4" fill="#fff" stroke="#000" stroke-width="1.3"/>
<path d="M1324,63.400000000000006 L1322,66.9" stroke="#111" stroke-width="1"/>
<text x="1327" y="67.9" font-size="3.8" fill="#0a0a0a" font-weight="bold" text-anchor="start" font-family="Liberation Sans" style="white-space:pre"  stroke="#0a0a0a" stroke-width="0.18">H-039</text>
<path d="M1320.5,73 L1323,73 Q1325,73 1325,75 L1325,80.5 L1323,83.5 L1320.5,83.5" fill="#fff" stroke="#000" stroke-width="1.3"/>
<path d="M1324,82.5 L1322,86.0" stroke="#111" stroke-width="1"/>
<text x="1327" y="87.0" font-size="3.8" fill="#0a0a0a" font-weight="bold" text-anchor="start" font-family="Liberation Sans" style="white-space:pre"  stroke="#0a0a0a" stroke-width="0.18">H-025</text>
<path d="M1320.5,91.8 L1323,91.8 Q1325,91.8 1325,93.8 L1325,99.3 L1323,102.3 L1320.5,102.3" fill="#fff" stroke="#000" stroke-width="1.3"/>
<path d="M1324,101.3 L1322,104.8" stroke="#111" stroke-width="1"/>
<text x="1327" y="105.8" font-size="3.8" fill="#0a0a0a" font-weight="bold" text-anchor="start" font-family="Liberation Sans" style="white-space:pre"  stroke="#0a0a0a" stroke-width="0.18">H-017</text>
<path d="M1320.5,110.9 L1323,110.9 Q1325,110.9 1325,112.9 L1325,118.4 L1323,121.4 L1320.5,121.4" fill="#fff" stroke="#000" stroke-width="1.3"/>
<path d="M1324,120.4 L1322,123.9" stroke="#111" stroke-width="1"/>
<text x="1327" y="124.9" font-size="3.8" fill="#0a0a0a" font-weight="bold" text-anchor="start" font-family="Liberation Sans" style="white-space:pre"  stroke="#0a0a0a" stroke-width="0.18">H-036</text>
<path d="M1320.5,129.6 L1323,129.6 Q1325,129.6 1325,131.6 L1325,137.1 L1323,140.1 L1320.5,140.1" fill="#fff" stroke="#000" stroke-width="1.3"/>
<path d="M1324,139.1 L1322,142.6" stroke="#111" stroke-width="1"/>
<text x="1327" y="143.6" font-size="3.8" fill="#0a0a0a" font-weight="bold" text-anchor="start" font-family="Liberation Sans" style="white-space:pre"  stroke="#0a0a0a" stroke-width="0.18">H-038</text>
<path d="M1320.5,148.6 L1323,148.6 Q1325,148.6 1325,150.6 L1325,156.1 L1323,159.1 L1320.5,159.1" fill="#fff" stroke="#000" stroke-width="1.3"/>
<path d="M1324,158.1 L1322,161.6" stroke="#111" stroke-width="1"/>
<text x="1327" y="162.6" font-size="3.8" fill="#0a0a0a" font-weight="bold" text-anchor="start" font-family="Liberation Sans" style="white-space:pre"  stroke="#0a0a0a" stroke-width="0.18">H-039</text>
<path d="M1320.5,167.1 L1323,167.1 Q1325,167.1 1325,169.1 L1325,174.6 L1323,177.6 L1320.5,177.6" fill="#fff" stroke="#000" stroke-width="1.3"/>
<path d="M1324,176.6 L1322,180.1" stroke="#111" stroke-width="1"/>
<text x="1327" y="181.1" font-size="3.8" fill="#0a0a0a" font-weight="bold" text-anchor="start" font-family="Liberation Sans" style="white-space:pre"  stroke="#0a0a0a" stroke-width="0.18">H-006</text>
<path d="M1320.5,181.3 L1323,181.3 Q1325,181.3 1325,183.3 L1325,188.8 L1323,191.8 L1320.5,191.8" fill="#fff" stroke="#000" stroke-width="1.3"/>
<path d="M1324,190.8 L1322,194.3" stroke="#111" stroke-width="1"/>
<text x="1327" y="195.3" font-size="3.8" fill="#0a0a0a" font-weight="bold" text-anchor="start" font-family="Liberation Sans" style="white-space:pre"  stroke="#0a0a0a" stroke-width="0.18">H-004</text>
<path d="M1320.5,195.6 L1323,195.6 Q1325,195.6 1325,197.6 L1325,203.1 L1323,206.1 L1320.5,206.1" fill="#fff" stroke="#000" stroke-width="1.3"/>
<path d="M1324,205.1 L1322,208.6" stroke="#111" stroke-width="1"/>
<text x="1327" y="209.6" font-size="3.8" fill="#0a0a0a" font-weight="bold" text-anchor="start" font-family="Liberation Sans" style="white-space:pre"  stroke="#0a0a0a" stroke-width="0.18">H-004</text>
<path d="M1320.5,209.4 L1323,209.4 Q1325,209.4 1325,211.4 L1325,216.9 L1323,219.9 L1320.5,219.9" fill="#fff" stroke="#000" stroke-width="1.3"/>
<path d="M1324,218.9 L1322,222.4" stroke="#111" stroke-width="1"/>
<text x="1327" y="223.4" font-size="3.8" fill="#0a0a0a" font-weight="bold" text-anchor="start" font-family="Liberation Sans" style="white-space:pre"  stroke="#0a0a0a" stroke-width="0.18">H-015</text>
<path d="M1320.5,223.6 L1323,223.6 Q1325,223.6 1325,225.6 L1325,231.1 L1323,234.1 L1320.5,234.1" fill="#fff" stroke="#000" stroke-width="1.3"/>
<path d="M1324,233.1 L1322,236.6" stroke="#111" stroke-width="1"/>
<text x="1327" y="237.6" font-size="3.8" fill="#0a0a0a" font-weight="bold" text-anchor="start" font-family="Liberation Sans" style="white-space:pre"  stroke="#0a0a0a" stroke-width="0.18">H-017</text>
<path d="M1320.5,237.9 L1323,237.9 Q1325,237.9 1325,239.9 L1325,245.4 L1323,248.4 L1320.5,248.4" fill="#fff" stroke="#000" stroke-width="1.3"/>
<path d="M1324,247.4 L1322,250.9" stroke="#111" stroke-width="1"/>
<text x="1327" y="251.9" font-size="3.8" fill="#0a0a0a" font-weight="bold" text-anchor="start" font-family="Liberation Sans" style="white-space:pre"  stroke="#0a0a0a" stroke-width="0.18">H-018</text>
<path d="M1320.5,251.89999999999998 L1323,251.89999999999998 Q1325,251.89999999999998 1325,253.89999999999998 L1325,259.4 L1323,262.4 L1320.5,262.4" fill="#fff" stroke="#000" stroke-width="1.3"/>
<path d="M1324,261.4 L1322,264.9" stroke="#111" stroke-width="1"/>
<text x="1327" y="265.9" font-size="3.8" fill="#0a0a0a" font-weight="bold" text-anchor="start" font-family="Liberation Sans" style="white-space:pre"  stroke="#0a0a0a" stroke-width="0.18">H-029</text>
<path d="M1320.5,266.2 L1323,266.2 Q1325,266.2 1325,268.2 L1325,287.9 L1323,290.9 L1320.5,290.9" fill="#fff" stroke="#000" stroke-width="1.3"/>
<path d="M1324,289.9 L1322,293.4" stroke="#111" stroke-width="1"/>
<text x="1327" y="294.4" font-size="3.8" fill="#0a0a0a" font-weight="bold" text-anchor="start" font-family="Liberation Sans" style="white-space:pre"  stroke="#0a0a0a" stroke-width="0.18">H-031</text>
<path d="M1320.5,294.3 L1323,294.3 Q1325,294.3 1325,296.3 L1325,301.8 L1323,304.8 L1320.5,304.8" fill="#fff" stroke="#000" stroke-width="1.3"/>
<path d="M1324,303.8 L1322,307.3" stroke="#111" stroke-width="1"/>
<text x="1327" y="308.3" font-size="3.8" fill="#0a0a0a" font-weight="bold" text-anchor="start" font-family="Liberation Sans" style="white-space:pre"  stroke="#0a0a0a" stroke-width="0.18">H-026</text>
<path d="M1320.5,312.9 L1323,312.9 Q1325,312.9 1325,314.9 L1325,320.4 L1323,323.4 L1320.5,323.4" fill="#fff" stroke="#000" stroke-width="1.3"/>
<path d="M1324,322.4 L1322,325.9" stroke="#111" stroke-width="1"/>
<text x="1327" y="326.9" font-size="3.8" fill="#0a0a0a" font-weight="bold" text-anchor="start" font-family="Liberation Sans" style="white-space:pre"  stroke="#0a0a0a" stroke-width="0.18">H-029</text>
<path d="M1320.5,332.3 L1323,332.3 Q1325,332.3 1325,334.3 L1325,339.8 L1323,342.8 L1320.5,342.8" fill="#fff" stroke="#000" stroke-width="1.3"/>
<path d="M1324,341.8 L1322,345.3" stroke="#111" stroke-width="1"/>
<text x="1327" y="346.3" font-size="3.8" fill="#0a0a0a" font-weight="bold" text-anchor="start" font-family="Liberation Sans" style="white-space:pre"  stroke="#0a0a0a" stroke-width="0.18">H-038</text>
<path d="M1320.5,351.3 L1323,351.3 Q1325,351.3 1325,353.3 L1325,396.8 L1323,399.8 L1320.5,399.8" fill="#fff" stroke="#000" stroke-width="1.3"/>
<path d="M1324,398.8 L1322,402.3" stroke="#111" stroke-width="1"/>
<text x="1327" y="403.3" font-size="3.8" fill="#0a0a0a" font-weight="bold" text-anchor="start" font-family="Liberation Sans" style="white-space:pre"  stroke="#0a0a0a" stroke-width="0.18">H-029</text>
<path d="M1320.5,408.4 L1323,408.4 Q1325,408.4 1325,410.4 L1325,415.9 L1323,418.9 L1320.5,418.9" fill="#fff" stroke="#000" stroke-width="1.3"/>
<path d="M1324,417.9 L1322,421.4" stroke="#111" stroke-width="1"/>
<text x="1327" y="422.4" font-size="3.8" fill="#0a0a0a" font-weight="bold" text-anchor="start" font-family="Liberation Sans" style="white-space:pre"  stroke="#0a0a0a" stroke-width="0.18">H-025</text>
<path d="M1320.5,427.2 L1323,427.2 Q1325,427.2 1325,429.2 L1325,434.7 L1323,437.7 L1320.5,437.7" fill="#fff" stroke="#000" stroke-width="1.3"/>
<path d="M1324,436.7 L1322,440.2" stroke="#111" stroke-width="1"/>
<text x="1327" y="441.2" font-size="3.8" fill="#0a0a0a" font-weight="bold" text-anchor="start" font-family="Liberation Sans" style="white-space:pre"  stroke="#0a0a0a" stroke-width="0.18">H-029</text>
<path d="M1320.5,446.3 L1323,446.3 Q1325,446.3 1325,448.3 L1325,453.8 L1323,456.8 L1320.5,456.8" fill="#fff" stroke="#000" stroke-width="1.3"/>
<path d="M1324,455.8 L1322,459.3" stroke="#111" stroke-width="1"/>
<text x="1327" y="460.3" font-size="3.8" fill="#0a0a0a" font-weight="bold" text-anchor="start" font-family="Liberation Sans" style="white-space:pre"  stroke="#0a0a0a" stroke-width="0.18">H-018</text>
<polyline points="1324.6,172.1 1451.6,172.1 1475.3,214.4" fill="none" stroke="#101010" stroke-width="1"/>
<polyline points="1324.6,186.3 1451.6,186.3 1475.3,214.4" fill="none" stroke="#101010" stroke-width="1"/>
<polyline points="1324.6,200.6 1451.6,200.6 1475.3,214.4" fill="none" stroke="#101010" stroke-width="1"/>
<polyline points="1324.6,214.4 1451.6,214.4 1475.3,214.4" fill="none" stroke="#101010" stroke-width="1"/>
<polyline points="1324.6,228.6 1451.6,228.6 1475.3,214.4" fill="none" stroke="#101010" stroke-width="1"/>
<polyline points="1324.6,242.9 1451.6,242.9 1475.3,214.4" fill="none" stroke="#101010" stroke-width="1"/>
<polyline points="1324.6,256.9 1451.6,256.9 1475.3,214.4" fill="none" stroke="#101010" stroke-width="1"/>
<polyline points="1324.6,271.2 1451.6,271.2 1465.8,280.6" fill="none" stroke="#101010" stroke-width="1"/>
<polyline points="1324.6,285.4 1451.6,285.4 1465.8,280.6" fill="none" stroke="#101010" stroke-width="1"/>
<polyline points="1324.6,432.2 1447.5,432.2 1447.5,493.1 1390.5,493.1" fill="none" stroke="#101010" stroke-width="1"/>
<polyline points="1324.6,451.3 1433.1,451.3 1433.1,483.7 1390.5,483.7" fill="none" stroke="#101010" stroke-width="1"/>
<text x="1326" y="24.8" font-size="3.4" fill="#0a0a0a" font-weight="bold" text-anchor="start" font-family="Liberation Sans" style="white-space:pre"  stroke="#0a0a0a" stroke-width="0.18">1</text>
<text x="1318.5" y="27.0" font-size="3.4" fill="#0a0a0a" font-weight="bold" text-anchor="end" font-family="Liberation Sans" style="white-space:pre"  stroke="#0a0a0a" stroke-width="0.18">GROUND</text>
<polyline points="1324.6,25.8 1617,25.8" fill="none" stroke="#101010" stroke-width="1"/>
<circle cx="1617" cy="25.8" r="1.2" fill="#101010"/>
<text x="1624.6" y="27.0" font-size="4.6" fill="#0a0a0a" font-weight="bold" text-anchor="start" font-family="Liberation Sans" style="white-space:pre"  stroke="#0a0a0a" stroke-width="0.18">SH04: D-6</text>
<rect x="1375.232" y="23.2" width="28.735999999999876" height="5.200000000000003" fill="#fff"/>
<text x="1389.6" y="27.5" font-size="4.6" fill="#0a0a0a" font-weight="bold" text-anchor="middle" font-family="Liberation Sans" style="white-space:pre"  stroke="#0a0a0a" stroke-width="0.18">G075 BL 0.8</text>
<text x="1326" y="39.3" font-size="3.4" fill="#0a0a0a" font-weight="bold" text-anchor="start" font-family="Liberation Sans" style="white-space:pre"  stroke="#0a0a0a" stroke-width="0.18">8</text>
<text x="1318.5" y="41.5" font-size="3.4" fill="#0a0a0a" font-weight="bold" text-anchor="end" font-family="Liberation Sans" style="white-space:pre"  stroke="#0a0a0a" stroke-width="0.18">GROUND</text>
<polyline points="1324.6,40.3 1617,40.3" fill="none" stroke="#101010" stroke-width="1"/>
<circle cx="1617" cy="40.3" r="1.2" fill="#101010"/>
<text x="1624.6" y="41.5" font-size="4.6" fill="#0a0a0a" font-weight="bold" text-anchor="start" font-family="Liberation Sans" style="white-space:pre"  stroke="#0a0a0a" stroke-width="0.18">SH06: D-6</text>
<rect x="1375.232" y="37.699999999999996" width="28.735999999999876" height="5.200000000000003" fill="#fff"/>
<text x="1389.6" y="42.0" font-size="4.6" fill="#0a0a0a" font-weight="bold" text-anchor="middle" font-family="Liberation Sans" style="white-space:pre"  stroke="#0a0a0a" stroke-width="0.18">G034 BL 0.8</text>
<text x="1326" y="57.9" font-size="3.4" fill="#0a0a0a" font-weight="bold" text-anchor="start" font-family="Liberation Sans" style="white-space:pre"  stroke="#0a0a0a" stroke-width="0.18">15</text>
<text x="1318.5" y="60.1" font-size="3.4" fill="#0a0a0a" font-weight="bold" text-anchor="end" font-family="Liberation Sans" style="white-space:pre"  stroke="#0a0a0a" stroke-width="0.18">GROUND</text>
<polyline points="1324.6,58.9 1617,58.9" fill="none" stroke="#101010" stroke-width="1"/>
<circle cx="1617" cy="58.9" r="1.2" fill="#101010"/>
<text x="1624.6" y="60.1" font-size="4.6" fill="#0a0a0a" font-weight="bold" text-anchor="start" font-family="Liberation Sans" style="white-space:pre"  stroke="#0a0a0a" stroke-width="0.18">SH01: C-1</text>
<rect x="1375.232" y="56.3" width="28.735999999999876" height="5.200000000000003" fill="#fff"/>
<text x="1389.6" y="60.6" font-size="4.6" fill="#0a0a0a" font-weight="bold" text-anchor="middle" font-family="Liberation Sans" style="white-space:pre"  stroke="#0a0a0a" stroke-width="0.18">G071 BL 0.8</text>
<text x="1326" y="77" font-size="3.4" fill="#0a0a0a" font-weight="bold" text-anchor="start" font-family="Liberation Sans" style="white-space:pre"  stroke="#0a0a0a" stroke-width="0.18">22</text>
<text x="1318.5" y="79.2" font-size="3.4" fill="#0a0a0a" font-weight="bold" text-anchor="end" font-family="Liberation Sans" style="white-space:pre"  stroke="#0a0a0a" stroke-width="0.18">GROUND</text>
<polyline points="1324.6,78 1617,78" fill="none" stroke="#101010" stroke-width="1"/>
<circle cx="1617" cy="78" r="1.2" fill="#101010"/>
<text x="1624.6" y="79.2" font-size="4.6" fill="#0a0a0a" font-weight="bold" text-anchor="start" font-family="Liberation Sans" style="white-space:pre"  stroke="#0a0a0a" stroke-width="0.18">SH06: C-6</text>
<rect x="1375.232" y="75.4" width="28.735999999999876" height="5.199999999999989" fill="#fff"/>
<text x="1389.6" y="79.7" font-size="4.6" fill="#0a0a0a" font-weight="bold" text-anchor="middle" font-family="Liberation Sans" style="white-space:pre"  stroke="#0a0a0a" stroke-width="0.18">G035 BL 0.8</text>
<text x="1326" y="95.8" font-size="3.4" fill="#0a0a0a" font-weight="bold" text-anchor="start" font-family="Liberation Sans" style="white-space:pre"  stroke="#0a0a0a" stroke-width="0.18">29</text>
<text x="1318.5" y="98.0" font-size="3.4" fill="#0a0a0a" font-weight="bold" text-anchor="end" font-family="Liberation Sans" style="white-space:pre"  stroke="#0a0a0a" stroke-width="0.18">GROUND</text>
<polyline points="1324.6,96.8 1617,96.8" fill="none" stroke="#101010" stroke-width="1"/>
<circle cx="1617" cy="96.8" r="1.2" fill="#101010"/>
<text x="1624.6" y="98.0" font-size="4.6" fill="#0a0a0a" font-weight="bold" text-anchor="start" font-family="Liberation Sans" style="white-space:pre"  stroke="#0a0a0a" stroke-width="0.18">SH03: C-6</text>
<rect x="1375.232" y="94.2" width="28.735999999999876" height="5.199999999999989" fill="#fff"/>
<text x="1389.6" y="98.5" font-size="4.6" fill="#0a0a0a" font-weight="bold" text-anchor="middle" font-family="Liberation Sans" style="white-space:pre"  stroke="#0a0a0a" stroke-width="0.18">G079 BL 0.8</text>
<text x="1326" y="114.9" font-size="3.4" fill="#0a0a0a" font-weight="bold" text-anchor="start" font-family="Liberation Sans" style="white-space:pre"  stroke="#0a0a0a" stroke-width="0.18">6</text>
<text x="1318.5" y="117.10000000000001" font-size="3.4" fill="#0a0a0a" font-weight="bold" text-anchor="end" font-family="Liberation Sans" style="white-space:pre"  stroke="#0a0a0a" stroke-width="0.18">GROUND</text>
<polyline points="1324.6,115.9 1617,115.9" fill="none" stroke="#101010" stroke-width="1"/>
<circle cx="1617" cy="115.9" r="1.2" fill="#101010"/>
<text x="1624.6" y="117.10000000000001" font-size="4.6" fill="#0a0a0a" font-weight="bold" text-anchor="start" font-family="Liberation Sans" style="white-space:pre"  stroke="#0a0a0a" stroke-width="0.18">SH03: C-6</text>
<rect x="1375.232" y="113.30000000000001" width="28.735999999999876" height="5.199999999999989" fill="#fff"/>
<text x="1389.6" y="117.60000000000001" font-size="4.6" fill="#0a0a0a" font-weight="bold" text-anchor="middle" font-family="Liberation Sans" style="white-space:pre"  stroke="#0a0a0a" stroke-width="0.18">G080 BL 0.8</text>
<text x="1326" y="133.6" font-size="3.4" fill="#0a0a0a" font-weight="bold" text-anchor="start" font-family="Liberation Sans" style="white-space:pre"  stroke="#0a0a0a" stroke-width="0.18">13</text>
<text x="1318.5" y="135.79999999999998" font-size="3.4" fill="#0a0a0a" font-weight="bold" text-anchor="end" font-family="Liberation Sans" style="white-space:pre"  stroke="#0a0a0a" stroke-width="0.18">GROUND</text>
<polyline points="1324.6,134.6 1617,134.6" fill="none" stroke="#101010" stroke-width="1"/>
<circle cx="1617" cy="134.6" r="1.2" fill="#101010"/>
<text x="1624.6" y="135.79999999999998" font-size="4.6" fill="#0a0a0a" font-weight="bold" text-anchor="start" font-family="Liberation Sans" style="white-space:pre"  stroke="#0a0a0a" stroke-width="0.18">SH05: B-6</text>
<rect x="1375.232" y="132.0" width="28.735999999999876" height="5.199999999999989" fill="#fff"/>
<text x="1389.6" y="136.29999999999998" font-size="4.6" fill="#0a0a0a" font-weight="bold" text-anchor="middle" font-family="Liberation Sans" style="white-space:pre"  stroke="#0a0a0a" stroke-width="0.18">G081 BL 0.8</text>
<text x="1326" y="152.6" font-size="3.4" fill="#0a0a0a" font-weight="bold" text-anchor="start" font-family="Liberation Sans" style="white-space:pre"  stroke="#0a0a0a" stroke-width="0.18">20</text>
<text x="1318.5" y="154.79999999999998" font-size="3.4" fill="#0a0a0a" font-weight="bold" text-anchor="end" font-family="Liberation Sans" style="white-space:pre"  stroke="#0a0a0a" stroke-width="0.18">GROUND</text>
<polyline points="1324.6,153.6 1617,153.6" fill="none" stroke="#101010" stroke-width="1"/>
<circle cx="1617" cy="153.6" r="1.2" fill="#101010"/>
<text x="1624.6" y="154.79999999999998" font-size="4.6" fill="#0a0a0a" font-weight="bold" text-anchor="start" font-family="Liberation Sans" style="white-space:pre"  stroke="#0a0a0a" stroke-width="0.18">SH05: B-6</text>
<rect x="1375.232" y="151.0" width="28.735999999999876" height="5.199999999999989" fill="#fff"/>
<text x="1389.6" y="155.29999999999998" font-size="4.6" fill="#0a0a0a" font-weight="bold" text-anchor="middle" font-family="Liberation Sans" style="white-space:pre"  stroke="#0a0a0a" stroke-width="0.18">G082 BL 0.8</text>
<text x="1326" y="171.1" font-size="3.4" fill="#0a0a0a" font-weight="bold" text-anchor="start" font-family="Liberation Sans" style="white-space:pre"  stroke="#0a0a0a" stroke-width="0.18">27</text>
<text x="1318.5" y="173.29999999999998" font-size="3.4" fill="#0a0a0a" font-weight="bold" text-anchor="end" font-family="Liberation Sans" style="white-space:pre"  stroke="#0a0a0a" stroke-width="0.18">GROUND</text>
<rect x="1375.232" y="169.5" width="28.735999999999876" height="5.199999999999989" fill="#fff"/>
<text x="1389.6" y="173.79999999999998" font-size="4.6" fill="#0a0a0a" font-weight="bold" text-anchor="middle" font-family="Liberation Sans" style="white-space:pre"  stroke="#0a0a0a" stroke-width="0.18">G110 BK 0.8</text>
<text x="1326" y="185.3" font-size="3.4" fill="#0a0a0a" font-weight="bold" text-anchor="start" font-family="Liberation Sans" style="white-space:pre"  stroke="#0a0a0a" stroke-width="0.18">4</text>
<text x="1318.5" y="187.5" font-size="3.4" fill="#0a0a0a" font-weight="bold" text-anchor="end" font-family="Liberation Sans" style="white-space:pre"  stroke="#0a0a0a" stroke-width="0.18">GROUND</text>
<rect x="1375.232" y="183.70000000000002" width="28.735999999999876" height="5.199999999999989" fill="#fff"/>
<text x="1389.6" y="188.0" font-size="4.6" fill="#0a0a0a" font-weight="bold" text-anchor="middle" font-family="Liberation Sans" style="white-space:pre"  stroke="#0a0a0a" stroke-width="0.18">G063 BK 0.8</text>
<text x="1326" y="199.6" font-size="3.4" fill="#0a0a0a" font-weight="bold" text-anchor="start" font-family="Liberation Sans" style="white-space:pre"  stroke="#0a0a0a" stroke-width="0.18">11</text>
<text x="1318.5" y="201.79999999999998" font-size="3.4" fill="#0a0a0a" font-weight="bold" text-anchor="end" font-family="Liberation Sans" style="white-space:pre"  stroke="#0a0a0a" stroke-width="0.18">GROUND</text>
<rect x="1375.232" y="198.0" width="28.735999999999876" height="5.199999999999989" fill="#fff"/>
<text x="1389.6" y="202.29999999999998" font-size="4.6" fill="#0a0a0a" font-weight="bold" text-anchor="middle" font-family="Liberation Sans" style="white-space:pre"  stroke="#0a0a0a" stroke-width="0.18">G064 BK 0.8</text>
<text x="1326" y="213.4" font-size="3.4" fill="#0a0a0a" font-weight="bold" text-anchor="start" font-family="Liberation Sans" style="white-space:pre"  stroke="#0a0a0a" stroke-width="0.18">18</text>
<text x="1318.5" y="215.6" font-size="3.4" fill="#0a0a0a" font-weight="bold" text-anchor="end" font-family="Liberation Sans" style="white-space:pre"  stroke="#0a0a0a" stroke-width="0.18">GROUND</text>
<rect x="1375.232" y="211.8" width="28.735999999999876" height="5.199999999999989" fill="#fff"/>
<text x="1389.6" y="216.1" font-size="4.6" fill="#0a0a0a" font-weight="bold" text-anchor="middle" font-family="Liberation Sans" style="white-space:pre"  stroke="#0a0a0a" stroke-width="0.18">G065 BK 0.8</text>
<text x="1326" y="227.6" font-size="3.4" fill="#0a0a0a" font-weight="bold" text-anchor="start" font-family="Liberation Sans" style="white-space:pre"  stroke="#0a0a0a" stroke-width="0.18">25</text>
<text x="1318.5" y="229.79999999999998" font-size="3.4" fill="#0a0a0a" font-weight="bold" text-anchor="end" font-family="Liberation Sans" style="white-space:pre"  stroke="#0a0a0a" stroke-width="0.18">GROUND</text>
<rect x="1375.232" y="226.0" width="28.735999999999876" height="5.199999999999989" fill="#fff"/>
<text x="1389.6" y="230.29999999999998" font-size="4.6" fill="#0a0a0a" font-weight="bold" text-anchor="middle" font-family="Liberation Sans" style="white-space:pre"  stroke="#0a0a0a" stroke-width="0.18">G066 BK 0.8</text>
<text x="1326" y="241.9" font-size="3.4" fill="#0a0a0a" font-weight="bold" text-anchor="start" font-family="Liberation Sans" style="white-space:pre"  stroke="#0a0a0a" stroke-width="0.18">2</text>
<text x="1318.5" y="244.1" font-size="3.4" fill="#0a0a0a" font-weight="bold" text-anchor="end" font-family="Liberation Sans" style="white-space:pre"  stroke="#0a0a0a" stroke-width="0.18">GROUND</text>
<rect x="1375.232" y="240.3" width="28.735999999999876" height="5.199999999999989" fill="#fff"/>
<text x="1389.6" y="244.6" font-size="4.6" fill="#0a0a0a" font-weight="bold" text-anchor="middle" font-family="Liberation Sans" style="white-space:pre"  stroke="#0a0a0a" stroke-width="0.18">G067 BK 0.8</text>
<text x="1326" y="255.89999999999998" font-size="3.4" fill="#0a0a0a" font-weight="bold" text-anchor="start" font-family="Liberation Sans" style="white-space:pre"  stroke="#0a0a0a" stroke-width="0.18">9</text>
<text x="1318.5" y="258.09999999999997" font-size="3.4" fill="#0a0a0a" font-weight="bold" text-anchor="end" font-family="Liberation Sans" style="white-space:pre"  stroke="#0a0a0a" stroke-width="0.18">GROUND</text>
<rect x="1375.232" y="254.29999999999998" width="28.735999999999876" height="5.200000000000017" fill="#fff"/>
<text x="1389.6" y="258.59999999999997" font-size="4.6" fill="#0a0a0a" font-weight="bold" text-anchor="middle" font-family="Liberation Sans" style="white-space:pre"  stroke="#0a0a0a" stroke-width="0.18">G068 BK 0.8</text>
<text x="1326" y="270.2" font-size="3.4" fill="#0a0a0a" font-weight="bold" text-anchor="start" font-family="Liberation Sans" style="white-space:pre"  stroke="#0a0a0a" stroke-width="0.18">16</text>
<text x="1318.5" y="272.4" font-size="3.4" fill="#0a0a0a" font-weight="bold" text-anchor="end" font-family="Liberation Sans" style="white-space:pre"  stroke="#0a0a0a" stroke-width="0.18">GROUND</text>
<rect x="1375.232" y="268.59999999999997" width="28.735999999999876" height="5.2000000000000455" fill="#fff"/>
<text x="1389.6" y="272.9" font-size="4.6" fill="#0a0a0a" font-weight="bold" text-anchor="middle" font-family="Liberation Sans" style="white-space:pre"  stroke="#0a0a0a" stroke-width="0.18">G069 BK 0.8</text>
<text x="1326" y="284.4" font-size="3.4" fill="#0a0a0a" font-weight="bold" text-anchor="start" font-family="Liberation Sans" style="white-space:pre"  stroke="#0a0a0a" stroke-width="0.18">23</text>
<text x="1318.5" y="286.59999999999997" font-size="3.4" fill="#0a0a0a" font-weight="bold" text-anchor="end" font-family="Liberation Sans" style="white-space:pre"  stroke="#0a0a0a" stroke-width="0.18">GROUND</text>
<rect x="1375.232" y="282.79999999999995" width="28.735999999999876" height="5.2000000000000455" fill="#fff"/>
<text x="1389.6" y="287.09999999999997" font-size="4.6" fill="#0a0a0a" font-weight="bold" text-anchor="middle" font-family="Liberation Sans" style="white-space:pre"  stroke="#0a0a0a" stroke-width="0.18">G070 BK 0.8</text>
<text x="1326" y="298.3" font-size="3.4" fill="#0a0a0a" font-weight="bold" text-anchor="start" font-family="Liberation Sans" style="white-space:pre"  stroke="#0a0a0a" stroke-width="0.18">30</text>
<text x="1318.5" y="300.5" font-size="3.4" fill="#0a0a0a" font-weight="bold" text-anchor="end" font-family="Liberation Sans" style="white-space:pre"  stroke="#0a0a0a" stroke-width="0.18">GROUND</text>
<polyline points="1324.6,299.3 1617,299.3" fill="none" stroke="#101010" stroke-width="1"/>
<circle cx="1617" cy="299.3" r="1.2" fill="#101010"/>
<text x="1624.6" y="300.5" font-size="4.6" fill="#0a0a0a" font-weight="bold" text-anchor="start" font-family="Liberation Sans" style="white-space:pre"  stroke="#0a0a0a" stroke-width="0.18">SH04: C-6</text>
<rect x="1375.232" y="296.7" width="28.735999999999876" height="5.2000000000000455" fill="#fff"/>
<text x="1389.6" y="301.0" font-size="4.6" fill="#0a0a0a" font-weight="bold" text-anchor="middle" font-family="Liberation Sans" style="white-space:pre"  stroke="#0a0a0a" stroke-width="0.18">G077 BL 0.8</text>
<text x="1326" y="316.9" font-size="3.4" fill="#0a0a0a" font-weight="bold" text-anchor="start" font-family="Liberation Sans" style="white-space:pre"  stroke="#0a0a0a" stroke-width="0.18">7</text>
<text x="1318.5" y="319.09999999999997" font-size="3.4" fill="#0a0a0a" font-weight="bold" text-anchor="end" font-family="Liberation Sans" style="white-space:pre"  stroke="#0a0a0a" stroke-width="0.18">BACKUP ALARM</text>
<polyline points="1324.6,317.9 1617,317.9" fill="none" stroke="#101010" stroke-width="1"/>
<circle cx="1617" cy="317.9" r="1.2" fill="#101010"/>
<text x="1624.6" y="319.09999999999997" font-size="4.6" fill="#0a0a0a" font-weight="bold" text-anchor="start" font-family="Liberation Sans" style="white-space:pre"  stroke="#0a0a0a" stroke-width="0.18">SH08: B-6</text>
<rect x="1375.232" y="315.29999999999995" width="28.735999999999876" height="5.2000000000000455" fill="#fff"/>
<text x="1389.6" y="319.59999999999997" font-size="4.6" fill="#0a0a0a" font-weight="bold" text-anchor="middle" font-family="Liberation Sans" style="white-space:pre"  stroke="#0a0a0a" stroke-width="0.18">K100 YE 0.8</text>
<text x="1326" y="336.3" font-size="3.4" fill="#0a0a0a" font-weight="bold" text-anchor="start" font-family="Liberation Sans" style="white-space:pre"  stroke="#0a0a0a" stroke-width="0.18">14</text>
<polyline points="1324.6,337.3 1617,337.3" fill="none" stroke="#101010" stroke-width="1"/>
<circle cx="1617" cy="337.3" r="1.2" fill="#101010"/>
<text x="1624.6" y="338.5" font-size="4.6" fill="#0a0a0a" font-weight="bold" text-anchor="start" font-family="Liberation Sans" style="white-space:pre"  stroke="#0a0a0a" stroke-width="0.18">SH8: B-1</text>
<rect x="1375.232" y="334.7" width="28.735999999999876" height="5.2000000000000455" fill="#fff"/>
<text x="1389.6" y="339.0" font-size="4.6" fill="#0a0a0a" font-weight="bold" text-anchor="middle" font-family="Liberation Sans" style="white-space:pre"  stroke="#0a0a0a" stroke-width="0.18">H052 YE 0.8</text>
<text x="1326" y="355.3" font-size="3.4" fill="#0a0a0a" font-weight="bold" text-anchor="start" font-family="Liberation Sans" style="white-space:pre"  stroke="#0a0a0a" stroke-width="0.18">21</text>
<polyline points="1324.6,356.3 1617,356.3" fill="none" stroke="#101010" stroke-width="1"/>
<circle cx="1617" cy="356.3" r="1.2" fill="#101010"/>
<text x="1624.6" y="357.5" font-size="4.6" fill="#0a0a0a" font-weight="bold" text-anchor="start" font-family="Liberation Sans" style="white-space:pre"  stroke="#0a0a0a" stroke-width="0.18">SH8: B-1</text>
<rect x="1375.232" y="353.7" width="28.735999999999876" height="5.2000000000000455" fill="#fff"/>
<text x="1389.6" y="358.0" font-size="4.6" fill="#0a0a0a" font-weight="bold" text-anchor="middle" font-family="Liberation Sans" style="white-space:pre"  stroke="#0a0a0a" stroke-width="0.18">K040 GY 0.8</text>
<text x="1326" y="374.2" font-size="3.4" fill="#0a0a0a" font-weight="bold" text-anchor="start" font-family="Liberation Sans" style="white-space:pre"  stroke="#0a0a0a" stroke-width="0.18">28</text>
<text x="1318.5" y="376.4" font-size="3.4" fill="#0a0a0a" font-weight="bold" text-anchor="end" font-family="Liberation Sans" style="white-space:pre"  stroke="#0a0a0a" stroke-width="0.18">ANGLE RIGHT</text>
<polyline points="1324.6,375.2 1617,375.2" fill="none" stroke="#101010" stroke-width="1"/>
<circle cx="1617" cy="375.2" r="1.2" fill="#101010"/>
<text x="1624.6" y="376.4" font-size="4.6" fill="#0a0a0a" font-weight="bold" text-anchor="start" font-family="Liberation Sans" style="white-space:pre"  stroke="#0a0a0a" stroke-width="0.18">SH06: B-6</text>
<rect x="1375.232" y="372.59999999999997" width="28.735999999999876" height="5.2000000000000455" fill="#fff"/>
<text x="1389.6" y="376.9" font-size="4.6" fill="#0a0a0a" font-weight="bold" text-anchor="middle" font-family="Liberation Sans" style="white-space:pre"  stroke="#0a0a0a" stroke-width="0.18">K330 WH 0.8</text>
<text x="1326" y="393.3" font-size="3.4" fill="#0a0a0a" font-weight="bold" text-anchor="start" font-family="Liberation Sans" style="white-space:pre"  stroke="#0a0a0a" stroke-width="0.18">5</text>
<text x="1318.5" y="395.5" font-size="3.4" fill="#0a0a0a" font-weight="bold" text-anchor="end" font-family="Liberation Sans" style="white-space:pre"  stroke="#0a0a0a" stroke-width="0.18">ANGLE LEFT</text>
<polyline points="1324.6,394.3 1617,394.3" fill="none" stroke="#101010" stroke-width="1"/>
<circle cx="1617" cy="394.3" r="1.2" fill="#101010"/>
<text x="1624.6" y="395.5" font-size="4.6" fill="#0a0a0a" font-weight="bold" text-anchor="start" font-family="Liberation Sans" style="white-space:pre"  stroke="#0a0a0a" stroke-width="0.18">SH06: B-6</text>
<rect x="1375.232" y="391.7" width="28.735999999999876" height="5.2000000000000455" fill="#fff"/>
<text x="1389.6" y="396.0" font-size="4.6" fill="#0a0a0a" font-weight="bold" text-anchor="middle" font-family="Liberation Sans" style="white-space:pre"  stroke="#0a0a0a" stroke-width="0.18">K320 WH 0.8</text>
<text x="1326" y="412.4" font-size="3.4" fill="#0a0a0a" font-weight="bold" text-anchor="start" font-family="Liberation Sans" style="white-space:pre"  stroke="#0a0a0a" stroke-width="0.18">12</text>
<text x="1318.5" y="414.59999999999997" font-size="3.4" fill="#0a0a0a" font-weight="bold" text-anchor="end" font-family="Liberation Sans" style="white-space:pre"  stroke="#0a0a0a" stroke-width="0.18">ANGLE RTN</text>
<polyline points="1324.6,413.4 1617,413.4" fill="none" stroke="#101010" stroke-width="1"/>
<circle cx="1617" cy="413.4" r="1.2" fill="#101010"/>
<text x="1624.6" y="414.59999999999997" font-size="4.6" fill="#0a0a0a" font-weight="bold" text-anchor="start" font-family="Liberation Sans" style="white-space:pre"  stroke="#0a0a0a" stroke-width="0.18">SH06: B-1</text>
<rect x="1375.232" y="410.79999999999995" width="28.735999999999876" height="5.2000000000000455" fill="#fff"/>
<text x="1389.6" y="415.09999999999997" font-size="4.6" fill="#0a0a0a" font-weight="bold" text-anchor="middle" font-family="Liberation Sans" style="white-space:pre"  stroke="#0a0a0a" stroke-width="0.18">B100 GY 0.8</text>
<text x="1326" y="431.2" font-size="3.4" fill="#0a0a0a" font-weight="bold" text-anchor="start" font-family="Liberation Sans" style="white-space:pre"  stroke="#0a0a0a" stroke-width="0.18">19</text>
<text x="1318.5" y="433.4" font-size="3.4" fill="#0a0a0a" font-weight="bold" text-anchor="end" font-family="Liberation Sans" style="white-space:pre"  stroke="#0a0a0a" stroke-width="0.18">GROUND</text>
<rect x="1375.232" y="429.59999999999997" width="28.735999999999876" height="5.2000000000000455" fill="#fff"/>
<text x="1389.6" y="433.9" font-size="4.6" fill="#0a0a0a" font-weight="bold" text-anchor="middle" font-family="Liberation Sans" style="white-space:pre"  stroke="#0a0a0a" stroke-width="0.18">G106 BL 0.8</text>
<text x="1326" y="450.3" font-size="3.4" fill="#0a0a0a" font-weight="bold" text-anchor="start" font-family="Liberation Sans" style="white-space:pre"  stroke="#0a0a0a" stroke-width="0.18">26</text>
<text x="1318.5" y="452.5" font-size="3.4" fill="#0a0a0a" font-weight="bold" text-anchor="end" font-family="Liberation Sans" style="white-space:pre"  stroke="#0a0a0a" stroke-width="0.18">DIESEL PEDAL</text>
<rect x="1375.232" y="448.7" width="28.735999999999876" height="5.2000000000000455" fill="#fff"/>
<text x="1389.6" y="453.0" font-size="4.6" fill="#0a0a0a" font-weight="bold" text-anchor="middle" font-family="Liberation Sans" style="white-space:pre"  stroke="#0a0a0a" stroke-width="0.18">C130 WH 0.8</text>
<circle cx="1475.3" cy="214.4" r="1.8" fill="#101010"/>
<text x="1478" y="211.7" font-size="4.6" fill="#0a0a0a" font-weight="bold" text-anchor="start" font-family="Liberation Sans" style="white-space:pre"  stroke="#0a0a0a" stroke-width="0.18">SP-017</text>
<circle cx="1465.8" cy="280.6" r="1.8" fill="#101010"/>
<text x="1468" y="277.7" font-size="4.6" fill="#0a0a0a" font-weight="bold" text-anchor="start" font-family="Liberation Sans" style="white-space:pre"  stroke="#0a0a0a" stroke-width="0.18">SP-016</text>
<polyline points="1475.3,214.4 1551.3,214.4 1569.8,247.5" fill="none" stroke="#101010" stroke-width="1"/>
<polyline points="1465.8,280.4 1551.3,280.4 1569.8,247.5" fill="none" stroke="#101010" stroke-width="1"/>
<rect x="1499.0320000000002" y="211.8" width="28.735999999999876" height="5.199999999999989" fill="#fff"/>
<text x="1513.4" y="216.1" font-size="4.6" fill="#0a0a0a" font-weight="bold" text-anchor="middle" font-family="Liberation Sans" style="white-space:pre"  stroke="#0a0a0a" stroke-width="0.18">G072 BK 2.0</text>
<rect x="1494.432" y="277.79999999999995" width="28.735999999999876" height="5.2000000000000455" fill="#fff"/>
<text x="1508.8" y="282.09999999999997" font-size="4.6" fill="#0a0a0a" font-weight="bold" text-anchor="middle" font-family="Liberation Sans" style="white-space:pre"  stroke="#0a0a0a" stroke-width="0.18">G073 BK 0.8</text>
<circle cx="1569.8" cy="247.5" r="1.8" fill="#101010"/>
<text x="1566.5" y="249.2" font-size="4.6" fill="#0a0a0a" font-weight="bold" text-anchor="end" font-family="Liberation Sans" style="white-space:pre"  stroke="#0a0a0a" stroke-width="0.18">SP-018</text>
<polyline points="1569.8,247.5 1617,247.5" fill="none" stroke="#101010" stroke-width="1"/>
<circle cx="1617" cy="247.5" r="1.2" fill="#101010"/>
<rect x="1579.232" y="244.9" width="28.735999999999876" height="5.199999999999989" fill="#fff"/>
<text x="1593.6" y="249.2" font-size="4.6" fill="#0a0a0a" font-weight="bold" text-anchor="middle" font-family="Liberation Sans" style="white-space:pre"  stroke="#0a0a0a" stroke-width="0.18">G074 BK 2.0</text>
<text x="1624.8" y="248.7" font-size="4.6" fill="#0a0a0a" font-weight="bold" text-anchor="start" font-family="Liberation Sans" style="white-space:pre"  stroke="#0a0a0a" stroke-width="0.18">SH4: A-1</text>
<path d="M1371.5,498.4 L1371.5,480.8 Q1371.5,478.8 1373.5,478.8 L1388.5,478.8 Q1390.5,478.8 1390.5,480.8 L1390.5,498.4 Z" fill="none" stroke="#101010" stroke-width="0.9"/>
<line x1="1381.0" y1="478.8" x2="1381.0" y2="498.4" stroke="#101010" stroke-width="1.1"/>
<path d="M1374.25,498.4 L1376.25,500.9 L1377.05,497.4" fill="none" stroke="#101010" stroke-width="0.7"/>
<path d="M1383.75,498.4 L1385.75,500.9 L1386.55,497.4" fill="none" stroke="#101010" stroke-width="0.7"/>
<text x="1373" y="485.0" font-size="3.6" fill="#0a0a0a" font-weight="bold" text-anchor="start" font-family="Liberation Sans" style="white-space:pre"  stroke="#0a0a0a" stroke-width="0.18">28</text>
<text x="1383.5" y="485.0" font-size="3.6" fill="#0a0a0a" font-weight="bold" text-anchor="start" font-family="Liberation Sans" style="white-space:pre"  stroke="#0a0a0a" stroke-width="0.18">28</text>
<text x="1373" y="494.40000000000003" font-size="3.6" fill="#0a0a0a" font-weight="bold" text-anchor="start" font-family="Liberation Sans" style="white-space:pre"  stroke="#0a0a0a" stroke-width="0.18">27</text>
<text x="1383.5" y="494.40000000000003" font-size="3.6" fill="#0a0a0a" font-weight="bold" text-anchor="start" font-family="Liberation Sans" style="white-space:pre"  stroke="#0a0a0a" stroke-width="0.18">27</text>
<text x="1358.6" y="483.3" font-size="3.8" fill="#0a0a0a" font-weight="bold" text-anchor="start" font-family="Liberation Sans" style="white-space:pre"  stroke="#0a0a0a" stroke-width="0.18">H083A</text>
<text x="1392.2" y="500.7" font-size="3.8" fill="#0a0a0a" font-weight="bold" text-anchor="start" font-family="Liberation Sans" style="white-space:pre"  stroke="#0a0a0a" stroke-width="0.18">H083B</text>
<polyline points="1371.5,483.7 1300.5,483.7 1300.5,493.1 1291.4,493.1" fill="none" stroke="#101010" stroke-width="1"/>
<polyline points="1371.5,493.1 1310.3,493.1 1310.3,478.8 1291.4,478.8" fill="none" stroke="#101010" stroke-width="1"/>
<rect x="1321.632" y="481.09999999999997" width="28.735999999999876" height="5.2000000000000455" fill="#fff"/>
<text x="1336" y="485.4" font-size="4.6" fill="#0a0a0a" font-weight="bold" text-anchor="middle" font-family="Liberation Sans" style="white-space:pre"  stroke="#0a0a0a" stroke-width="0.18">C801 WH 0.8</text>
<rect x="1326.332" y="490.5" width="28.735999999999876" height="5.2000000000000455" fill="#fff"/>
<text x="1340.7" y="494.8" font-size="4.6" fill="#0a0a0a" font-weight="bold" text-anchor="middle" font-family="Liberation Sans" style="white-space:pre"  stroke="#0a0a0a" stroke-width="0.18">G107 BL 0.8</text>
<text x="1273.4" y="466.5" font-size="5.5" fill="#0a0a0a" font-weight="normal" text-anchor="middle" font-family="Liberation Sans" style="white-space:pre"  stroke="#0a0a0a" stroke-width="0.18">DECEL PEDAL</text>
<rect x="1258" y="469.3" width="29" height="28.80000000000001" fill="none" stroke="#101010" stroke-width="0.9" rx="0"/>
<path d="M1287,474.6 L1289.4,474.6 Q1291.4,474.6 1291.4,476.6 L1291.4,496.8 L1289.4,499.8 L1287,499.8" fill="#fff" stroke="#000" stroke-width="1.3"/>
<path d="M1290.4,498.8 L1288.4,502.3" stroke="#111" stroke-width="1"/>
<path d="M1258,474 L1255.3,474 Q1253.3,474 1253.3,476 L1253.3,481.4 L1255.3,484.4 L1258,484.4" fill="#fff" stroke="#000" stroke-width="1.3"/>
<path d="M1254.3,483.4 L1256.3,486.9" stroke="#111" stroke-width="1"/>
<rect x="1267.6" y="476.3" width="9.800000000000182" height="5.300000000000011" fill="none" stroke="#101010" stroke-width="0.9" rx="0"/>
<polyline points="1266,482 1278,476" fill="none" stroke="#101010" stroke-width="0.7"/>
<polyline points="1272.5,481.6 1272.5,493 1287,493" fill="none" stroke="#101010" stroke-width="0.7"/>
<text x="1260" y="478" font-size="3.2" fill="#0a0a0a" font-weight="bold" text-anchor="start" font-family="Liberation Sans" style="white-space:pre"  stroke="#0a0a0a" stroke-width="0.18">PWR</text>
<text x="1279" y="478" font-size="3.2" fill="#0a0a0a" font-weight="bold" text-anchor="start" font-family="Liberation Sans" style="white-space:pre"  stroke="#0a0a0a" stroke-width="0.18">OUT</text>
<text x="1257" y="490" font-size="3.4" fill="#0a0a0a" font-weight="bold" text-anchor="end" font-family="Liberation Sans" style="white-space:pre"  stroke="#0a0a0a" stroke-width="0.18">H-046</text>
<text x="1288" y="505" font-size="3.4" fill="#0a0a0a" font-weight="bold" text-anchor="start" font-family="Liberation Sans" style="white-space:pre"  stroke="#0a0a0a" stroke-width="0.18">H-046</text>
<text x="183.5" y="582" font-size="14.1" fill="#222" font-weight="normal" text-anchor="start" font-family="Liberation Sans" style="white-space:pre" >COLOR ABBREVIATIONS</text>
<text x="15" y="600.8" font-size="12" fill="#222" font-weight="normal" text-anchor="start" font-family="Liberation Sans" style="white-space:pre" >BK-------------</text>
<text x="87" y="600.8" font-size="12" fill="#222" font-weight="normal" text-anchor="start" font-family="Liberation Sans" style="white-space:pre" >BLACK</text>
<text x="195" y="600.8" font-size="12" fill="#222" font-weight="normal" text-anchor="start" font-family="Liberation Sans" style="white-space:pre" >GY-------------</text>
<text x="266.5" y="600.8" font-size="12" fill="#222" font-weight="normal" text-anchor="start" font-family="Liberation Sans" style="white-space:pre" >GRAY</text>
<text x="375" y="600.8" font-size="12" fill="#222" font-weight="normal" text-anchor="start" font-family="Liberation Sans" style="white-space:pre" >RD-------------</text>
<text x="447" y="600.8" font-size="12" fill="#222" font-weight="normal" text-anchor="start" font-family="Liberation Sans" style="white-space:pre" >RED</text>
<text x="15" y="615.0" font-size="12" fill="#222" font-weight="normal" text-anchor="start" font-family="Liberation Sans" style="white-space:pre" >BK\WH-------</text>
<text x="87" y="615.0" font-size="12" fill="#222" font-weight="normal" text-anchor="start" font-family="Liberation Sans" style="white-space:pre" >BLACK\WHITE</text>
<text x="195" y="615.0" font-size="12" fill="#222" font-weight="normal" text-anchor="start" font-family="Liberation Sans" style="white-space:pre" >LB-------------</text>
<text x="266.5" y="615.0" font-size="12" fill="#222" font-weight="normal" text-anchor="start" font-family="Liberation Sans" style="white-space:pre" >LIGHT BLUE</text>
<text x="375" y="615.0" font-size="12" fill="#222" font-weight="normal" text-anchor="start" font-family="Liberation Sans" style="white-space:pre" >TN--------------</text>
<text x="447" y="615.0" font-size="12" fill="#222" font-weight="normal" text-anchor="start" font-family="Liberation Sans" style="white-space:pre" >TAN</text>
<text x="15" y="629.1999999999999" font-size="12" fill="#222" font-weight="normal" text-anchor="start" font-family="Liberation Sans" style="white-space:pre" >BL-------------</text>
<text x="87" y="629.1999999999999" font-size="12" fill="#222" font-weight="normal" text-anchor="start" font-family="Liberation Sans" style="white-space:pre" >BLUE</text>
<text x="195" y="629.1999999999999" font-size="12" fill="#222" font-weight="normal" text-anchor="start" font-family="Liberation Sans" style="white-space:pre" >LG-------------</text>
<text x="266.5" y="629.1999999999999" font-size="12" fill="#222" font-weight="normal" text-anchor="start" font-family="Liberation Sans" style="white-space:pre" >LIGHT GREEN</text>
<text x="375" y="629.1999999999999" font-size="12" fill="#222" font-weight="normal" text-anchor="start" font-family="Liberation Sans" style="white-space:pre" >VT--------------</text>
<text x="447" y="629.1999999999999" font-size="12" fill="#222" font-weight="normal" text-anchor="start" font-family="Liberation Sans" style="white-space:pre" >VIOLET</text>
<text x="15" y="643.4" font-size="12" fill="#222" font-weight="normal" text-anchor="start" font-family="Liberation Sans" style="white-space:pre" >BR-------------</text>
<text x="87" y="643.4" font-size="12" fill="#222" font-weight="normal" text-anchor="start" font-family="Liberation Sans" style="white-space:pre" >BROWN</text>
<text x="195" y="643.4" font-size="12" fill="#222" font-weight="normal" text-anchor="start" font-family="Liberation Sans" style="white-space:pre" >OR-------------</text>
<text x="266.5" y="643.4" font-size="12" fill="#222" font-weight="normal" text-anchor="start" font-family="Liberation Sans" style="white-space:pre" >ORANGE</text>
<text x="375" y="643.4" font-size="12" fill="#222" font-weight="normal" text-anchor="start" font-family="Liberation Sans" style="white-space:pre" >WH-------------</text>
<text x="447" y="643.4" font-size="12" fill="#222" font-weight="normal" text-anchor="start" font-family="Liberation Sans" style="white-space:pre" >WHITE</text>
<text x="15" y="657.5999999999999" font-size="12" fill="#222" font-weight="normal" text-anchor="start" font-family="Liberation Sans" style="white-space:pre" >GN------------</text>
<text x="87" y="657.5999999999999" font-size="12" fill="#222" font-weight="normal" text-anchor="start" font-family="Liberation Sans" style="white-space:pre" >GREEN</text>
<text x="195" y="657.5999999999999" font-size="12" fill="#222" font-weight="normal" text-anchor="start" font-family="Liberation Sans" style="white-space:pre" >PK-------------</text>
<text x="266.5" y="657.5999999999999" font-size="12" fill="#222" font-weight="normal" text-anchor="start" font-family="Liberation Sans" style="white-space:pre" >PINK</text>
<text x="375" y="657.5999999999999" font-size="12" fill="#222" font-weight="normal" text-anchor="start" font-family="Liberation Sans" style="white-space:pre" >YE--------------</text>
<text x="447" y="657.5999999999999" font-size="12" fill="#222" font-weight="normal" text-anchor="start" font-family="Liberation Sans" style="white-space:pre" >YELLOW</text>
<text x="1079.5" y="584" font-size="21.58" fill="#1a1a1a" font-weight="bold" text-anchor="start" font-family="Liberation Sans" style="white-space:pre" >D180C DOZER ELECTRICAL SCHEMATIC</text>
<text x="1576" y="584" font-size="21.3" fill="#1a1a1a" font-weight="bold" text-anchor="start" font-family="Liberation Sans" style="white-space:pre" >SIDE 1 OF 4</text>
<text x="1086.5" y="610" font-size="21.5" fill="#1a1a1a" font-weight="bold" text-anchor="start" font-family="Liberation Sans" style="white-space:pre" >Tier 2 - PIN BREAK: NHC108500 and above</text>
<text x="1088.5" y="632.5" font-size="17.95" fill="#1a1a1a" font-weight="normal" text-anchor="start" font-family="Liberation Sans" style="white-space:pre" >Additional copies of this schematic can be ordered through</text>
<text x="1088.5" y="653.5" font-size="17.95" fill="#1a1a1a" font-weight="normal" text-anchor="start" font-family="Liberation Sans" style="white-space:pre" >Technical Publications Distribution System.  Part # RAC 48048999</text>
<path d="M611,709.5 L602,716.5 L611,723.5 Z" fill="#a6a6a6"/>
<rect x="611.5" y="710" width="3.0" height="13" fill="#a6a6a6"/>
<path d="M636.5,710 L629,716.5 L636.5,723 Z" fill="#9a9a9a"/>
<rect x="648.5" y="706.5" width="114" height="19" fill="#fff" stroke="#a0a0a0" stroke-width="1"/>
<text x="653.5" y="721" font-size="12.8" fill="#1a1a1a" font-weight="normal" text-anchor="start" font-family="Liberation Sans" style="white-space:pre" letter-spacing="0.5">1 / 4</text>
<path d="M752.5,714.5 L758,714.5 L755.25,717.5 Z" fill="#222"/>
<path d="M771.5,710 L779.5,717 L771.5,724 Z" fill="#1a1a1a"/>
<rect x="795" y="710" width="3.5" height="14" fill="#1a1a1a"/>
<path d="M798.5,710 L807.5,717 L798.5,724 Z" fill="#1a1a1a"/>
<rect x="819.5" y="709.5" width="9" height="8" fill="#fff" stroke="#333" stroke-width="1"/>
<rect x="819" y="709" width="10" height="2" fill="#446688"/>
<rect x="825.5" y="715.5" width="9" height="9" fill="#fff" stroke="#333" stroke-width="1"/>
<path d="M826,711.5 L833,711.5 M828.5,709.5 L826,711.5 L828.5,713.5" fill="none" stroke="#3a8a6a" stroke-width="1"/>
<rect x="845.5" y="709.5" width="9" height="8" fill="#f4f4f4" stroke="#bbb" stroke-width="1"/>
<rect x="851.5" y="715.5" width="9" height="9" fill="#f4f4f4" stroke="#bbb" stroke-width="1"/>
<rect x="1406" y="708" width="23" height="17.5" fill="#c6d9f0"/>
<rect x="1411.5" y="710.5" width="10" height="13" fill="#fff" stroke="#555" stroke-width="1"/>
<line x1="1413.5" y1="713.5" x2="1419.5" y2="713.5" stroke="#555" stroke-width="1"/>
<line x1="1413.5" y1="716.5" x2="1419.5" y2="716.5" stroke="#555" stroke-width="1"/>
<line x1="1413.5" y1="719.5" x2="1419.5" y2="719.5" stroke="#555" stroke-width="1"/>
<path d="M1435.5,709 L1435.5,716.5 L1446.5,716.5 L1446.5,709 M1435.5,725 L1435.5,719.5 L1446.5,719.5 L1446.5,725" fill="none" stroke="#555" stroke-width="1"/>
<line x1="1437.5" y1="711.5" x2="1444.5" y2="711.5" stroke="#555" stroke-width="1"/>
<line x1="1437.5" y1="714" x2="1444.5" y2="714" stroke="#555" stroke-width="1"/>
<line x1="1437.5" y1="722.5" x2="1444.5" y2="722.5" stroke="#555" stroke-width="1"/>
<rect x="1461.5" y="710.5" width="6" height="13" fill="none" stroke="#555" stroke-width="1"/>
<rect x="1469.5" y="710.5" width="6" height="13" fill="none" stroke="#555" stroke-width="1"/>
<path d="M1486.5,710.5 L1493.5,710.5 M1486.5,714.5 L1493.5,714.5 M1486.5,718.5 L1493.5,718.5 M1486.5,722.5 L1493.5,722.5 M1495.5,710.5 L1502.5,710.5 M1495.5,714.5 L1502.5,714.5 M1495.5,718.5 L1502.5,718.5 M1495.5,722.5 L1502.5,722.5 M1494.5,709 L1494.5,725" fill="none" stroke="#555" stroke-width="1"/>
<text x="1533" y="721" font-size="12.3" fill="#222" font-weight="normal" text-anchor="start" font-family="Liberation Sans" style="white-space:pre" >75%</text>
<path d="M1586,714.5 L1592,714.5 L1589,717.5 Z" fill="#222"/>
<circle cx="1603.5" cy="715.8" r="7" fill="none" stroke="#333" stroke-width="1"/>
<line x1="1599" y1="715.8" x2="1608" y2="715.8" stroke="#333" stroke-width="1"/>
<line x1="1618" y1="716.5" x2="1709" y2="716.5" stroke="#333" stroke-width="1"/>
<rect x="1649" y="712" width="4" height="8" fill="#333"/>
<line x1="1663.5" y1="713" x2="1663.5" y2="720" stroke="#333" stroke-width="1"/>
</svg>
</body></html>
